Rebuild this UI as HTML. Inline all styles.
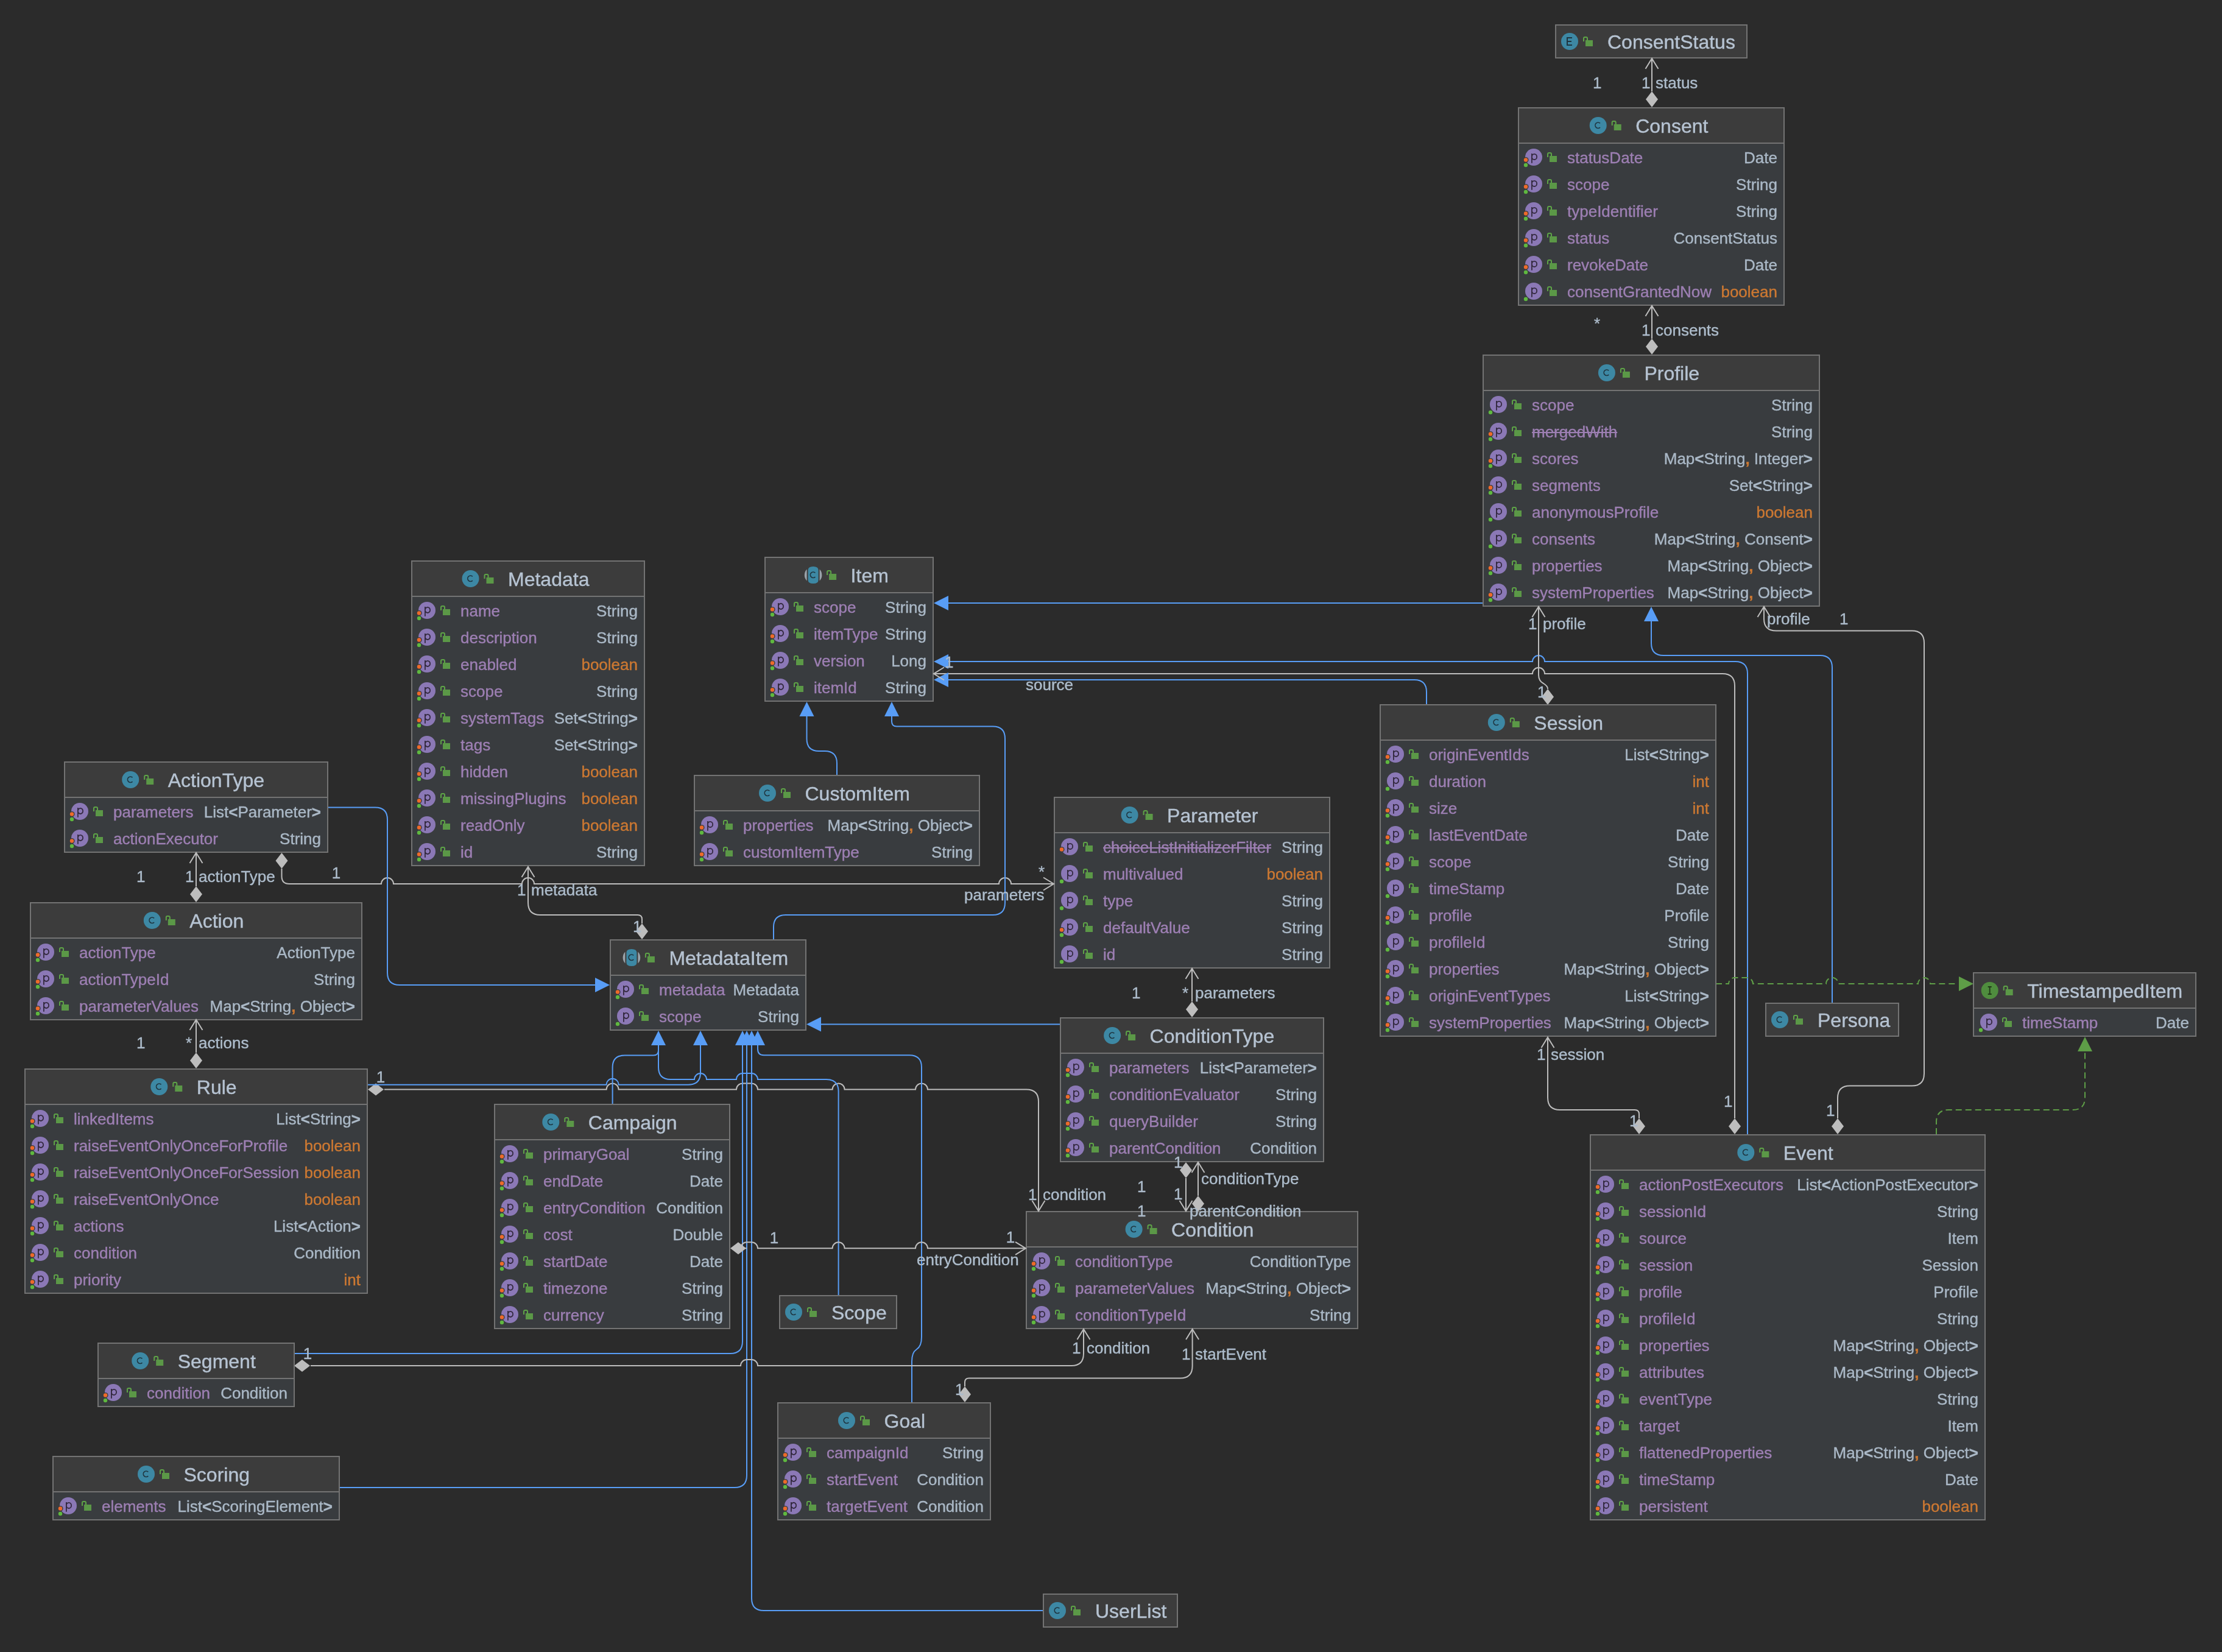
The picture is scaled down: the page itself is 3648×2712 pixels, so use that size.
<!DOCTYPE html>
<html><head><meta charset="utf-8"><style>
html,body{margin:0;padding:0;background:#2b2b2b;}
svg{display:block;font-family:"Liberation Sans", sans-serif;will-change:transform;}
</style></head><body>
<svg width="3648" height="2712" viewBox="0 0 3648 2712">
<rect width="3648" height="2712" fill="#2b2b2b"/>
<g><path d="M2712 96L2712 150" fill="none" stroke="#bdbdbd" stroke-width="2"/><path d="M2712 176L2702 163L2712 150L2722 163Z" fill="#bdbdbd"/><path d="M2712 502L2712 556" fill="none" stroke="#bdbdbd" stroke-width="2"/><path d="M2712 582L2702 569L2712 556L2722 569Z" fill="#bdbdbd"/><path d="M2435 990L1557 990" fill="none" stroke="#589df6" stroke-width="2"/><path d="M1533 990L1557 978L1557 1002Z" fill="#589df6"/><path d="M1557 1086L2516 1086A10 10 0 0 1 2526 1076A10 10 0 0 1 2536 1086L2849 1086Q2869 1086 2869 1106L2869 1862" fill="none" stroke="#589df6" stroke-width="2"/><path d="M1533 1086L1557 1074L1557 1098Z" fill="#589df6"/><path d="M1533 1106L2516 1106A10 10 0 0 1 2526 1096A10 10 0 0 1 2536 1106L2828 1106Q2848 1106 2848 1126L2848 1836" fill="none" stroke="#bdbdbd" stroke-width="2"/><path d="M2848 1862L2838 1849L2848 1836L2858 1849Z" fill="#bdbdbd"/><path d="M1557 1116L2322 1116Q2342 1116 2342 1136L2342 1157" fill="none" stroke="#589df6" stroke-width="2"/><path d="M1533 1116L1557 1104L1557 1128Z" fill="#589df6"/><path d="M2526 996V1108Q2526 1118 2534 1122Q2541 1126 2541 1131" fill="none" stroke="#bdbdbd" stroke-width="2"/><path d="M2541 1157L2531 1144L2541 1131L2551 1144Z" fill="#bdbdbd"/><path d="M2711 1020L2711 1056Q2711 1076 2731 1076L2988 1076Q3008 1076 3008 1096L3008 1646" fill="none" stroke="#589df6" stroke-width="2"/><path d="M2711 996L2699 1020L2723 1020Z" fill="#589df6"/><path d="M2896 996L2896 1015.8Q2896 1035.5 2915.8 1035.5L3139 1035.5Q3159 1035.5 3159 1055.5L3159 1762.5Q3159 1782.5 3139 1782.5L3037 1782.5Q3017 1782.5 3017 1802.5L3017 1836" fill="none" stroke="#bdbdbd" stroke-width="2"/><path d="M3017 1862L3007 1849L3017 1836L3027 1849Z" fill="#bdbdbd"/><path d="M2541 1703L2541 1802Q2541 1822 2561 1822L2684 1822Q2691 1822 2691 1829L2691 1836" fill="none" stroke="#bdbdbd" stroke-width="2"/><path d="M2691 1862L2681 1849L2691 1836L2701 1849Z" fill="#bdbdbd"/><path d="M2817 1615L2838 1615A10 10 0 0 1 2848 1605L2868 1605A10 10 0 0 1 2878 1615L2998 1615A10 10 0 0 1 3008 1605A10 10 0 0 1 3018 1615L3149 1615A10 10 0 0 1 3159 1605A10 10 0 0 1 3169 1615L3215 1615" fill="none" stroke="#5e9d47" stroke-width="2" stroke-dasharray="10 6"/><path d="M3240 1615L3216 1603L3216 1627Z" fill="#5e9d47"/><path d="M3179 1862L3179 1842Q3179 1822 3199 1822L3403 1822Q3423 1822 3423 1802L3423 1726" fill="none" stroke="#5e9d47" stroke-width="2" stroke-dasharray="10 6"/><path d="M3423 1702L3411 1726L3435 1726Z" fill="#5e9d47"/><path d="M322 1400L322 1455" fill="none" stroke="#bdbdbd" stroke-width="2"/><path d="M322 1481L312 1468L322 1455L332 1468Z" fill="#bdbdbd"/><path d="M322 1674L322 1728" fill="none" stroke="#bdbdbd" stroke-width="2"/><path d="M322 1754L312 1741L322 1728L332 1741Z" fill="#bdbdbd"/><path d="M462.5 1426L462.5 1438.5Q462.5 1451 475 1451L626 1451A10 10 0 0 1 636 1441A10 10 0 0 1 646 1451L857 1451A10 10 0 0 1 867 1441A10 10 0 0 1 877 1451L1640 1451A10 10 0 0 1 1650 1441A10 10 0 0 1 1660 1451L1730 1451" fill="none" stroke="#bdbdbd" stroke-width="2"/><path d="M462.5 1400L452.5 1413L462.5 1426L472.5 1413Z" fill="#bdbdbd"/><path d="M539 1325.5L616 1325.5Q636 1325.5 636 1345.5L636 1597Q636 1617 656 1617L977 1617" fill="none" stroke="#589df6" stroke-width="2"/><path d="M1001 1617L977 1605L977 1629Z" fill="#589df6"/><path d="M867 1423L867 1482Q867 1502 887 1502L1047 1502Q1054 1502 1054 1509L1054 1516" fill="none" stroke="#bdbdbd" stroke-width="2"/><path d="M1054 1542L1044 1529L1054 1516L1064 1529Z" fill="#bdbdbd"/><path d="M1324.5 1176L1324.5 1213Q1324.5 1233 1344.5 1233L1354 1233Q1374 1233 1374 1253L1374 1273" fill="none" stroke="#589df6" stroke-width="2"/><path d="M1324.5 1152L1312.5 1176L1336.5 1176Z" fill="#589df6"/><path d="M1270 1542L1270 1522Q1270 1502 1290 1502L1630 1502Q1650 1502 1650 1482L1650 1212.5Q1650 1192.5 1630 1192.5L1472.2 1192.5Q1464 1192.5 1464 1184.2L1464 1176" fill="none" stroke="#589df6" stroke-width="2"/><path d="M1464 1152L1452 1176L1476 1176Z" fill="#589df6"/><path d="M1740 1681.5L1348 1681.5" fill="none" stroke="#589df6" stroke-width="2"/><path d="M1324 1681.5L1348 1669.5L1348 1693.5Z" fill="#589df6"/><path d="M1957 1590L1957 1644" fill="none" stroke="#bdbdbd" stroke-width="2"/><path d="M1957 1670L1947 1657L1957 1644L1967 1657Z" fill="#bdbdbd"/><path d="M1947 1934L1947 1988" fill="none" stroke="#bdbdbd" stroke-width="2"/><path d="M1947 1908L1937 1921L1947 1934L1957 1921Z" fill="#bdbdbd"/><path d="M1967 1908L1967 1963" fill="none" stroke="#bdbdbd" stroke-width="2"/><path d="M1967 1989L1957 1976L1967 1963L1977 1976Z" fill="#bdbdbd"/><path d="M631 1788.5L995.6 1788.5A10 10 0 0 1 1005.6 1778.5A10 10 0 0 1 1015.6 1788.5L1209 1788.5A10 10 0 0 1 1219 1778.5L1234 1778.5A10 10 0 0 1 1244 1788.5L1366.6 1788.5A10 10 0 0 1 1376.6 1778.5A10 10 0 0 1 1386.6 1788.5L1503 1788.5A10 10 0 0 1 1513 1778.5A10 10 0 0 1 1523 1788.5L1685 1788.5Q1705 1788.5 1705 1808.5L1705 1988" fill="none" stroke="#bdbdbd" stroke-width="2"/><path d="M604 1788.5L617 1778.5L630 1788.5L617 1798.5Z" fill="#bdbdbd"/><path d="M604 1780.7L995.6 1780.7A10 10 0 0 1 1005.6 1770.7A10 10 0 0 1 1015.6 1780.7L1130 1780.7Q1150 1780.7 1150 1760.7L1150 1716" fill="none" stroke="#589df6" stroke-width="2"/><path d="M1150 1692L1138 1716L1162 1716Z" fill="#589df6"/><path d="M1005.6 1812L1005.6 1752.5Q1005.6 1732.5 1025.6 1732.5L1072.8 1732.5Q1081 1732.5 1081 1724.2L1081 1716" fill="none" stroke="#589df6" stroke-width="2"/><path d="M1081 1692L1069 1716L1093 1716Z" fill="#589df6"/><path d="M1081 1716L1081 1752Q1081 1772 1101 1772L1140 1772A10 10 0 0 1 1150 1762A10 10 0 0 1 1160 1772L1209 1772A10 10 0 0 1 1219 1762L1234 1762A10 10 0 0 1 1244 1772L1356.6 1772Q1376.6 1772 1376.6 1792L1376.6 2126" fill="none" stroke="#589df6" stroke-width="2"/><path d="M1244 1716V1722Q1244 1732.3 1254 1732.3H1493Q1513 1732.3 1513 1752V2195Q1513 2210 1505 2215Q1497 2220 1497 2235V2302" fill="none" stroke="#589df6" stroke-width="2"/><path d="M1244 1692L1232 1716L1256 1716Z" fill="#589df6"/><path d="M483 2222L1199 2222Q1219 2222 1219 2202L1219 1716" fill="none" stroke="#589df6" stroke-width="2"/><path d="M1219 1692L1207 1716L1231 1716Z" fill="#589df6"/><path d="M558 2442L1206 2442Q1226 2442 1226 2422L1226 1716" fill="none" stroke="#589df6" stroke-width="2"/><path d="M1226 1692L1214 1716L1238 1716Z" fill="#589df6"/><path d="M1712 2644L1254 2644Q1234 2644 1234 2624L1234 1716" fill="none" stroke="#589df6" stroke-width="2"/><path d="M1234 1692L1222 1716L1246 1716Z" fill="#589df6"/><path d="M1226 2049.3L1216 2049.3A10 10 0 0 1 1226 2039.3L1234 2039.3A10 10 0 0 1 1244 2049.3L1366.6 2049.3A10 10 0 0 1 1376.6 2039.3A10 10 0 0 1 1386.6 2049.3L1503 2049.3A10 10 0 0 1 1513 2039.3A10 10 0 0 1 1523 2049.3L1684 2049.3" fill="none" stroke="#bdbdbd" stroke-width="2"/><path d="M1199 2049.3L1212 2039.3L1225 2049.3L1212 2059.3Z" fill="#bdbdbd"/><path d="M510 2242L1216 2242A10 10 0 0 1 1226 2232L1234 2232A10 10 0 0 1 1244 2242L1759 2242Q1779 2242 1779 2222L1779 2182" fill="none" stroke="#bdbdbd" stroke-width="2"/><path d="M483 2242L496 2232L509 2242L496 2252Z" fill="#bdbdbd"/><path d="M1584 2276L1584 2269.2Q1584 2262.5 1590.8 2262.5L1937.6 2262.5Q1957.6 2262.5 1957.6 2242.5L1957.6 2182" fill="none" stroke="#bdbdbd" stroke-width="2"/><path d="M1584 2302L1574 2289L1584 2276L1594 2289Z" fill="#bdbdbd"/></g>
<g><rect x="2553" y="40" width="316" height="56" fill="#737373"/><rect x="2555" y="42" width="312" height="52" fill="#3c3c3c"/><circle cx="2577" cy="68" r="14" fill="#3d88a4"/><path d="M2581 62H2573V74H2581M2573 68H2580" fill="none" stroke="#1f3540" stroke-width="2"/><path d="M2600 68V63Q2600 61 2602 61H2604Q2606 61 2606 63V66" fill="none" stroke="#5ea447" stroke-width="2"/><rect x="2603" y="66" width="12" height="10" fill="#5b9847"/><text x="2639" y="80" font-size="32" fill="#b6c3d2" stroke="#b6c3d2" stroke-width="0.4">ConsentStatus</text><rect x="2492" y="176" width="438" height="326" fill="#737373"/><rect x="2494" y="178" width="434" height="56" fill="#3c3c3c"/><rect x="2494" y="236" width="434" height="264" fill="#393c3f"/><circle cx="2623.7" cy="206" r="14" fill="#3d88a4"/><path d="M2627.0 202.4A4.7 4.7 0 1 0 2627.0 209.1" fill="none" stroke="#1f3540" stroke-width="1.7"/><path d="M2646.7 206V201Q2646.7 199 2648.7 199H2650.7Q2652.7 199 2652.7 201V204" fill="none" stroke="#5ea447" stroke-width="2"/><rect x="2649.7" y="204" width="12" height="10" fill="#5b9847"/><text x="2685.2" y="218" font-size="32" fill="#b6c3d2" stroke="#b6c3d2" stroke-width="0.4">Consent</text><circle cx="2518" cy="258" r="14" fill="#8b78b6"/><path d="M2514.9 252V267.8M2514.9 257.4A4.1 4.6 0 1 1 2523.1 257.4A4.1 4.6 0 1 1 2514.9 257.4" fill="none" stroke="#33293f" stroke-width="1.8"/><circle cx="2505" cy="262.5" r="4.6" fill="#393c3f"/><circle cx="2505" cy="262.5" r="3.2" fill="#ee6a2a"/><circle cx="2505" cy="271" r="4.4" fill="#393c3f"/><circle cx="2505" cy="271" r="3.2" fill="#5fb83f"/><path d="M2541 258V253Q2541 251 2543 251H2545Q2547 251 2547 253V256" fill="none" stroke="#5ea447" stroke-width="2"/><rect x="2544" y="256" width="12" height="10" fill="#5b9847"/><text x="2573" y="268" font-size="26" fill="#9d7fb3" stroke="#9d7fb3" stroke-width="0.4">statusDate</text><text x="2918" y="268" font-size="26" fill="#aab8c6" stroke="#aab8c6" stroke-width="0.4" text-anchor="end">Date</text><circle cx="2518" cy="302" r="14" fill="#8b78b6"/><path d="M2514.9 296V311.8M2514.9 301.4A4.1 4.6 0 1 1 2523.1 301.4A4.1 4.6 0 1 1 2514.9 301.4" fill="none" stroke="#33293f" stroke-width="1.8"/><circle cx="2505" cy="306.5" r="4.6" fill="#393c3f"/><circle cx="2505" cy="306.5" r="3.2" fill="#ee6a2a"/><circle cx="2505" cy="315" r="4.4" fill="#393c3f"/><circle cx="2505" cy="315" r="3.2" fill="#5fb83f"/><path d="M2541 302V297Q2541 295 2543 295H2545Q2547 295 2547 297V300" fill="none" stroke="#5ea447" stroke-width="2"/><rect x="2544" y="300" width="12" height="10" fill="#5b9847"/><text x="2573" y="312" font-size="26" fill="#9d7fb3" stroke="#9d7fb3" stroke-width="0.4">scope</text><text x="2918" y="312" font-size="26" fill="#aab8c6" stroke="#aab8c6" stroke-width="0.4" text-anchor="end">String</text><circle cx="2518" cy="346" r="14" fill="#8b78b6"/><path d="M2514.9 340V355.8M2514.9 345.4A4.1 4.6 0 1 1 2523.1 345.4A4.1 4.6 0 1 1 2514.9 345.4" fill="none" stroke="#33293f" stroke-width="1.8"/><circle cx="2505" cy="350.5" r="4.6" fill="#393c3f"/><circle cx="2505" cy="350.5" r="3.2" fill="#ee6a2a"/><circle cx="2505" cy="359" r="4.4" fill="#393c3f"/><circle cx="2505" cy="359" r="3.2" fill="#5fb83f"/><path d="M2541 346V341Q2541 339 2543 339H2545Q2547 339 2547 341V344" fill="none" stroke="#5ea447" stroke-width="2"/><rect x="2544" y="344" width="12" height="10" fill="#5b9847"/><text x="2573" y="356" font-size="26" fill="#9d7fb3" stroke="#9d7fb3" stroke-width="0.4">typeIdentifier</text><text x="2918" y="356" font-size="26" fill="#aab8c6" stroke="#aab8c6" stroke-width="0.4" text-anchor="end">String</text><circle cx="2518" cy="390" r="14" fill="#8b78b6"/><path d="M2514.9 384V399.8M2514.9 389.4A4.1 4.6 0 1 1 2523.1 389.4A4.1 4.6 0 1 1 2514.9 389.4" fill="none" stroke="#33293f" stroke-width="1.8"/><circle cx="2505" cy="394.5" r="4.6" fill="#393c3f"/><circle cx="2505" cy="394.5" r="3.2" fill="#ee6a2a"/><circle cx="2505" cy="403" r="4.4" fill="#393c3f"/><circle cx="2505" cy="403" r="3.2" fill="#5fb83f"/><path d="M2541 390V385Q2541 383 2543 383H2545Q2547 383 2547 385V388" fill="none" stroke="#5ea447" stroke-width="2"/><rect x="2544" y="388" width="12" height="10" fill="#5b9847"/><text x="2573" y="400" font-size="26" fill="#9d7fb3" stroke="#9d7fb3" stroke-width="0.4">status</text><text x="2918" y="400" font-size="26" fill="#aab8c6" stroke="#aab8c6" stroke-width="0.4" text-anchor="end">ConsentStatus</text><circle cx="2518" cy="434" r="14" fill="#8b78b6"/><path d="M2514.9 428V443.8M2514.9 433.4A4.1 4.6 0 1 1 2523.1 433.4A4.1 4.6 0 1 1 2514.9 433.4" fill="none" stroke="#33293f" stroke-width="1.8"/><circle cx="2505" cy="438.5" r="4.6" fill="#393c3f"/><circle cx="2505" cy="438.5" r="3.2" fill="#ee6a2a"/><circle cx="2505" cy="447" r="4.4" fill="#393c3f"/><circle cx="2505" cy="447" r="3.2" fill="#5fb83f"/><path d="M2541 434V429Q2541 427 2543 427H2545Q2547 427 2547 429V432" fill="none" stroke="#5ea447" stroke-width="2"/><rect x="2544" y="432" width="12" height="10" fill="#5b9847"/><text x="2573" y="444" font-size="26" fill="#9d7fb3" stroke="#9d7fb3" stroke-width="0.4">revokeDate</text><text x="2918" y="444" font-size="26" fill="#aab8c6" stroke="#aab8c6" stroke-width="0.4" text-anchor="end">Date</text><circle cx="2518" cy="478" r="14" fill="#8b78b6"/><path d="M2514.9 472V487.8M2514.9 477.4A4.1 4.6 0 1 1 2523.1 477.4A4.1 4.6 0 1 1 2514.9 477.4" fill="none" stroke="#33293f" stroke-width="1.8"/><circle cx="2505" cy="491" r="4.4" fill="#393c3f"/><circle cx="2505" cy="491" r="3.2" fill="#5fb83f"/><path d="M2541 478V473Q2541 471 2543 471H2545Q2547 471 2547 473V476" fill="none" stroke="#5ea447" stroke-width="2"/><rect x="2544" y="476" width="12" height="10" fill="#5b9847"/><text x="2573" y="488" font-size="26" fill="#9d7fb3" stroke="#9d7fb3" stroke-width="0.4">consentGrantedNow</text><text x="2918" y="488" font-size="26" fill="#aab8c6" stroke="#aab8c6" stroke-width="0.4" text-anchor="end"><tspan fill="#cc7832" stroke="#cc7832">boolean</tspan></text><rect x="2434" y="582" width="554" height="414" fill="#737373"/><rect x="2436" y="584" width="550" height="56" fill="#3c3c3c"/><rect x="2436" y="642" width="550" height="352" fill="#393c3f"/><circle cx="2637.9" cy="612" r="14" fill="#3d88a4"/><path d="M2641.2000000000003 608.4A4.7 4.7 0 1 0 2641.2000000000003 615.1" fill="none" stroke="#1f3540" stroke-width="1.7"/><path d="M2660.9 612V607Q2660.9 605 2662.9 605H2664.9Q2666.9 605 2666.9 607V610" fill="none" stroke="#5ea447" stroke-width="2"/><rect x="2663.9" y="610" width="12" height="10" fill="#5b9847"/><text x="2699.4" y="624" font-size="32" fill="#b6c3d2" stroke="#b6c3d2" stroke-width="0.4">Profile</text><circle cx="2460" cy="664" r="14" fill="#8b78b6"/><path d="M2456.9 658V673.8M2456.9 663.4A4.1 4.6 0 1 1 2465.1 663.4A4.1 4.6 0 1 1 2456.9 663.4" fill="none" stroke="#33293f" stroke-width="1.8"/><circle cx="2447" cy="677" r="4.4" fill="#393c3f"/><circle cx="2447" cy="677" r="3.2" fill="#5fb83f"/><path d="M2483 664V659Q2483 657 2485 657H2487Q2489 657 2489 659V662" fill="none" stroke="#5ea447" stroke-width="2"/><rect x="2486" y="662" width="12" height="10" fill="#5b9847"/><text x="2515" y="674" font-size="26" fill="#9d7fb3" stroke="#9d7fb3" stroke-width="0.4">scope</text><text x="2976" y="674" font-size="26" fill="#aab8c6" stroke="#aab8c6" stroke-width="0.4" text-anchor="end">String</text><circle cx="2460" cy="708" r="14" fill="#8b78b6"/><path d="M2456.9 702V717.8M2456.9 707.4A4.1 4.6 0 1 1 2465.1 707.4A4.1 4.6 0 1 1 2456.9 707.4" fill="none" stroke="#33293f" stroke-width="1.8"/><circle cx="2447" cy="712.5" r="4.6" fill="#393c3f"/><circle cx="2447" cy="712.5" r="3.2" fill="#ee6a2a"/><circle cx="2447" cy="721" r="4.4" fill="#393c3f"/><circle cx="2447" cy="721" r="3.2" fill="#5fb83f"/><path d="M2483 708V703Q2483 701 2485 701H2487Q2489 701 2489 703V706" fill="none" stroke="#5ea447" stroke-width="2"/><rect x="2486" y="706" width="12" height="10" fill="#5b9847"/><text x="2515" y="718" font-size="26" fill="#9d7fb3" stroke="#9d7fb3" stroke-width="0.4">mergedWith</text><rect x="2515" y="709" width="140.2" height="2" fill="#9d7fb3"/><text x="2976" y="718" font-size="26" fill="#aab8c6" stroke="#aab8c6" stroke-width="0.4" text-anchor="end">String</text><circle cx="2460" cy="752" r="14" fill="#8b78b6"/><path d="M2456.9 746V761.8M2456.9 751.4A4.1 4.6 0 1 1 2465.1 751.4A4.1 4.6 0 1 1 2456.9 751.4" fill="none" stroke="#33293f" stroke-width="1.8"/><circle cx="2447" cy="756.5" r="4.6" fill="#393c3f"/><circle cx="2447" cy="756.5" r="3.2" fill="#ee6a2a"/><circle cx="2447" cy="765" r="4.4" fill="#393c3f"/><circle cx="2447" cy="765" r="3.2" fill="#5fb83f"/><path d="M2483 752V747Q2483 745 2485 745H2487Q2489 745 2489 747V750" fill="none" stroke="#5ea447" stroke-width="2"/><rect x="2486" y="750" width="12" height="10" fill="#5b9847"/><text x="2515" y="762" font-size="26" fill="#9d7fb3" stroke="#9d7fb3" stroke-width="0.4">scores</text><text x="2976" y="762" font-size="26" fill="#aab8c6" stroke="#aab8c6" stroke-width="0.4" text-anchor="end">Map<tspan font-weight="bold">&lt;</tspan>String<tspan fill="#cc7832" stroke="#cc7832" font-weight="bold">,</tspan> Integer<tspan font-weight="bold">&gt;</tspan></text><circle cx="2460" cy="796" r="14" fill="#8b78b6"/><path d="M2456.9 790V805.8M2456.9 795.4A4.1 4.6 0 1 1 2465.1 795.4A4.1 4.6 0 1 1 2456.9 795.4" fill="none" stroke="#33293f" stroke-width="1.8"/><circle cx="2447" cy="800.5" r="4.6" fill="#393c3f"/><circle cx="2447" cy="800.5" r="3.2" fill="#ee6a2a"/><circle cx="2447" cy="809" r="4.4" fill="#393c3f"/><circle cx="2447" cy="809" r="3.2" fill="#5fb83f"/><path d="M2483 796V791Q2483 789 2485 789H2487Q2489 789 2489 791V794" fill="none" stroke="#5ea447" stroke-width="2"/><rect x="2486" y="794" width="12" height="10" fill="#5b9847"/><text x="2515" y="806" font-size="26" fill="#9d7fb3" stroke="#9d7fb3" stroke-width="0.4">segments</text><text x="2976" y="806" font-size="26" fill="#aab8c6" stroke="#aab8c6" stroke-width="0.4" text-anchor="end">Set<tspan font-weight="bold">&lt;</tspan>String<tspan font-weight="bold">&gt;</tspan></text><circle cx="2460" cy="840" r="14" fill="#8b78b6"/><path d="M2456.9 834V849.8M2456.9 839.4A4.1 4.6 0 1 1 2465.1 839.4A4.1 4.6 0 1 1 2456.9 839.4" fill="none" stroke="#33293f" stroke-width="1.8"/><circle cx="2447" cy="853" r="4.4" fill="#393c3f"/><circle cx="2447" cy="853" r="3.2" fill="#5fb83f"/><path d="M2483 840V835Q2483 833 2485 833H2487Q2489 833 2489 835V838" fill="none" stroke="#5ea447" stroke-width="2"/><rect x="2486" y="838" width="12" height="10" fill="#5b9847"/><text x="2515" y="850" font-size="26" fill="#9d7fb3" stroke="#9d7fb3" stroke-width="0.4">anonymousProfile</text><text x="2976" y="850" font-size="26" fill="#aab8c6" stroke="#aab8c6" stroke-width="0.4" text-anchor="end"><tspan fill="#cc7832" stroke="#cc7832">boolean</tspan></text><circle cx="2460" cy="884" r="14" fill="#8b78b6"/><path d="M2456.9 878V893.8M2456.9 883.4A4.1 4.6 0 1 1 2465.1 883.4A4.1 4.6 0 1 1 2456.9 883.4" fill="none" stroke="#33293f" stroke-width="1.8"/><circle cx="2447" cy="897" r="4.4" fill="#393c3f"/><circle cx="2447" cy="897" r="3.2" fill="#5fb83f"/><path d="M2483 884V879Q2483 877 2485 877H2487Q2489 877 2489 879V882" fill="none" stroke="#5ea447" stroke-width="2"/><rect x="2486" y="882" width="12" height="10" fill="#5b9847"/><text x="2515" y="894" font-size="26" fill="#9d7fb3" stroke="#9d7fb3" stroke-width="0.4">consents</text><text x="2976" y="894" font-size="26" fill="#aab8c6" stroke="#aab8c6" stroke-width="0.4" text-anchor="end">Map<tspan font-weight="bold">&lt;</tspan>String<tspan fill="#cc7832" stroke="#cc7832" font-weight="bold">,</tspan> Consent<tspan font-weight="bold">&gt;</tspan></text><circle cx="2460" cy="928" r="14" fill="#8b78b6"/><path d="M2456.9 922V937.8M2456.9 927.4A4.1 4.6 0 1 1 2465.1 927.4A4.1 4.6 0 1 1 2456.9 927.4" fill="none" stroke="#33293f" stroke-width="1.8"/><circle cx="2447" cy="932.5" r="4.6" fill="#393c3f"/><circle cx="2447" cy="932.5" r="3.2" fill="#ee6a2a"/><circle cx="2447" cy="941" r="4.4" fill="#393c3f"/><circle cx="2447" cy="941" r="3.2" fill="#5fb83f"/><path d="M2483 928V923Q2483 921 2485 921H2487Q2489 921 2489 923V926" fill="none" stroke="#5ea447" stroke-width="2"/><rect x="2486" y="926" width="12" height="10" fill="#5b9847"/><text x="2515" y="938" font-size="26" fill="#9d7fb3" stroke="#9d7fb3" stroke-width="0.4">properties</text><text x="2976" y="938" font-size="26" fill="#aab8c6" stroke="#aab8c6" stroke-width="0.4" text-anchor="end">Map<tspan font-weight="bold">&lt;</tspan>String<tspan fill="#cc7832" stroke="#cc7832" font-weight="bold">,</tspan> Object<tspan font-weight="bold">&gt;</tspan></text><circle cx="2460" cy="972" r="14" fill="#8b78b6"/><path d="M2456.9 966V981.8M2456.9 971.4A4.1 4.6 0 1 1 2465.1 971.4A4.1 4.6 0 1 1 2456.9 971.4" fill="none" stroke="#33293f" stroke-width="1.8"/><circle cx="2447" cy="976.5" r="4.6" fill="#393c3f"/><circle cx="2447" cy="976.5" r="3.2" fill="#ee6a2a"/><circle cx="2447" cy="985" r="4.4" fill="#393c3f"/><circle cx="2447" cy="985" r="3.2" fill="#5fb83f"/><path d="M2483 972V967Q2483 965 2485 965H2487Q2489 965 2489 967V970" fill="none" stroke="#5ea447" stroke-width="2"/><rect x="2486" y="970" width="12" height="10" fill="#5b9847"/><text x="2515" y="982" font-size="26" fill="#9d7fb3" stroke="#9d7fb3" stroke-width="0.4">systemProperties</text><text x="2976" y="982" font-size="26" fill="#aab8c6" stroke="#aab8c6" stroke-width="0.4" text-anchor="end">Map<tspan font-weight="bold">&lt;</tspan>String<tspan fill="#cc7832" stroke="#cc7832" font-weight="bold">,</tspan> Object<tspan font-weight="bold">&gt;</tspan></text><rect x="675" y="920" width="384" height="502" fill="#737373"/><rect x="677" y="922" width="380" height="56" fill="#3c3c3c"/><rect x="677" y="980" width="380" height="440" fill="#393c3f"/><circle cx="772.5" cy="950" r="14" fill="#3d88a4"/><path d="M775.8 946.4A4.7 4.7 0 1 0 775.8 953.1" fill="none" stroke="#1f3540" stroke-width="1.7"/><path d="M795.5 950V945Q795.5 943 797.5 943H799.5Q801.5 943 801.5 945V948" fill="none" stroke="#5ea447" stroke-width="2"/><rect x="798.5" y="948" width="12" height="10" fill="#5b9847"/><text x="834.0" y="962" font-size="32" fill="#b6c3d2" stroke="#b6c3d2" stroke-width="0.4">Metadata</text><circle cx="701" cy="1002" r="14" fill="#8b78b6"/><path d="M697.9 996V1011.8M697.9 1001.4A4.1 4.6 0 1 1 706.1 1001.4A4.1 4.6 0 1 1 697.9 1001.4" fill="none" stroke="#33293f" stroke-width="1.8"/><circle cx="688" cy="1006.5" r="4.6" fill="#393c3f"/><circle cx="688" cy="1006.5" r="3.2" fill="#ee6a2a"/><circle cx="688" cy="1015" r="4.4" fill="#393c3f"/><circle cx="688" cy="1015" r="3.2" fill="#5fb83f"/><path d="M724 1002V997Q724 995 726 995H728Q730 995 730 997V1000" fill="none" stroke="#5ea447" stroke-width="2"/><rect x="727" y="1000" width="12" height="10" fill="#5b9847"/><text x="756" y="1012" font-size="26" fill="#9d7fb3" stroke="#9d7fb3" stroke-width="0.4">name</text><text x="1047" y="1012" font-size="26" fill="#aab8c6" stroke="#aab8c6" stroke-width="0.4" text-anchor="end">String</text><circle cx="701" cy="1046" r="14" fill="#8b78b6"/><path d="M697.9 1040V1055.8M697.9 1045.4A4.1 4.6 0 1 1 706.1 1045.4A4.1 4.6 0 1 1 697.9 1045.4" fill="none" stroke="#33293f" stroke-width="1.8"/><circle cx="688" cy="1050.5" r="4.6" fill="#393c3f"/><circle cx="688" cy="1050.5" r="3.2" fill="#ee6a2a"/><circle cx="688" cy="1059" r="4.4" fill="#393c3f"/><circle cx="688" cy="1059" r="3.2" fill="#5fb83f"/><path d="M724 1046V1041Q724 1039 726 1039H728Q730 1039 730 1041V1044" fill="none" stroke="#5ea447" stroke-width="2"/><rect x="727" y="1044" width="12" height="10" fill="#5b9847"/><text x="756" y="1056" font-size="26" fill="#9d7fb3" stroke="#9d7fb3" stroke-width="0.4">description</text><text x="1047" y="1056" font-size="26" fill="#aab8c6" stroke="#aab8c6" stroke-width="0.4" text-anchor="end">String</text><circle cx="701" cy="1090" r="14" fill="#8b78b6"/><path d="M697.9 1084V1099.8M697.9 1089.4A4.1 4.6 0 1 1 706.1 1089.4A4.1 4.6 0 1 1 697.9 1089.4" fill="none" stroke="#33293f" stroke-width="1.8"/><circle cx="688" cy="1094.5" r="4.6" fill="#393c3f"/><circle cx="688" cy="1094.5" r="3.2" fill="#ee6a2a"/><circle cx="688" cy="1103" r="4.4" fill="#393c3f"/><circle cx="688" cy="1103" r="3.2" fill="#5fb83f"/><path d="M724 1090V1085Q724 1083 726 1083H728Q730 1083 730 1085V1088" fill="none" stroke="#5ea447" stroke-width="2"/><rect x="727" y="1088" width="12" height="10" fill="#5b9847"/><text x="756" y="1100" font-size="26" fill="#9d7fb3" stroke="#9d7fb3" stroke-width="0.4">enabled</text><text x="1047" y="1100" font-size="26" fill="#aab8c6" stroke="#aab8c6" stroke-width="0.4" text-anchor="end"><tspan fill="#cc7832" stroke="#cc7832">boolean</tspan></text><circle cx="701" cy="1134" r="14" fill="#8b78b6"/><path d="M697.9 1128V1143.8M697.9 1133.4A4.1 4.6 0 1 1 706.1 1133.4A4.1 4.6 0 1 1 697.9 1133.4" fill="none" stroke="#33293f" stroke-width="1.8"/><circle cx="688" cy="1138.5" r="4.6" fill="#393c3f"/><circle cx="688" cy="1138.5" r="3.2" fill="#ee6a2a"/><circle cx="688" cy="1147" r="4.4" fill="#393c3f"/><circle cx="688" cy="1147" r="3.2" fill="#5fb83f"/><path d="M724 1134V1129Q724 1127 726 1127H728Q730 1127 730 1129V1132" fill="none" stroke="#5ea447" stroke-width="2"/><rect x="727" y="1132" width="12" height="10" fill="#5b9847"/><text x="756" y="1144" font-size="26" fill="#9d7fb3" stroke="#9d7fb3" stroke-width="0.4">scope</text><text x="1047" y="1144" font-size="26" fill="#aab8c6" stroke="#aab8c6" stroke-width="0.4" text-anchor="end">String</text><circle cx="701" cy="1178" r="14" fill="#8b78b6"/><path d="M697.9 1172V1187.8M697.9 1177.4A4.1 4.6 0 1 1 706.1 1177.4A4.1 4.6 0 1 1 697.9 1177.4" fill="none" stroke="#33293f" stroke-width="1.8"/><circle cx="688" cy="1182.5" r="4.6" fill="#393c3f"/><circle cx="688" cy="1182.5" r="3.2" fill="#ee6a2a"/><circle cx="688" cy="1191" r="4.4" fill="#393c3f"/><circle cx="688" cy="1191" r="3.2" fill="#5fb83f"/><path d="M724 1178V1173Q724 1171 726 1171H728Q730 1171 730 1173V1176" fill="none" stroke="#5ea447" stroke-width="2"/><rect x="727" y="1176" width="12" height="10" fill="#5b9847"/><text x="756" y="1188" font-size="26" fill="#9d7fb3" stroke="#9d7fb3" stroke-width="0.4">systemTags</text><text x="1047" y="1188" font-size="26" fill="#aab8c6" stroke="#aab8c6" stroke-width="0.4" text-anchor="end">Set<tspan font-weight="bold">&lt;</tspan>String<tspan font-weight="bold">&gt;</tspan></text><circle cx="701" cy="1222" r="14" fill="#8b78b6"/><path d="M697.9 1216V1231.8M697.9 1221.4A4.1 4.6 0 1 1 706.1 1221.4A4.1 4.6 0 1 1 697.9 1221.4" fill="none" stroke="#33293f" stroke-width="1.8"/><circle cx="688" cy="1226.5" r="4.6" fill="#393c3f"/><circle cx="688" cy="1226.5" r="3.2" fill="#ee6a2a"/><circle cx="688" cy="1235" r="4.4" fill="#393c3f"/><circle cx="688" cy="1235" r="3.2" fill="#5fb83f"/><path d="M724 1222V1217Q724 1215 726 1215H728Q730 1215 730 1217V1220" fill="none" stroke="#5ea447" stroke-width="2"/><rect x="727" y="1220" width="12" height="10" fill="#5b9847"/><text x="756" y="1232" font-size="26" fill="#9d7fb3" stroke="#9d7fb3" stroke-width="0.4">tags</text><text x="1047" y="1232" font-size="26" fill="#aab8c6" stroke="#aab8c6" stroke-width="0.4" text-anchor="end">Set<tspan font-weight="bold">&lt;</tspan>String<tspan font-weight="bold">&gt;</tspan></text><circle cx="701" cy="1266" r="14" fill="#8b78b6"/><path d="M697.9 1260V1275.8M697.9 1265.4A4.1 4.6 0 1 1 706.1 1265.4A4.1 4.6 0 1 1 697.9 1265.4" fill="none" stroke="#33293f" stroke-width="1.8"/><circle cx="688" cy="1270.5" r="4.6" fill="#393c3f"/><circle cx="688" cy="1270.5" r="3.2" fill="#ee6a2a"/><circle cx="688" cy="1279" r="4.4" fill="#393c3f"/><circle cx="688" cy="1279" r="3.2" fill="#5fb83f"/><path d="M724 1266V1261Q724 1259 726 1259H728Q730 1259 730 1261V1264" fill="none" stroke="#5ea447" stroke-width="2"/><rect x="727" y="1264" width="12" height="10" fill="#5b9847"/><text x="756" y="1276" font-size="26" fill="#9d7fb3" stroke="#9d7fb3" stroke-width="0.4">hidden</text><text x="1047" y="1276" font-size="26" fill="#aab8c6" stroke="#aab8c6" stroke-width="0.4" text-anchor="end"><tspan fill="#cc7832" stroke="#cc7832">boolean</tspan></text><circle cx="701" cy="1310" r="14" fill="#8b78b6"/><path d="M697.9 1304V1319.8M697.9 1309.4A4.1 4.6 0 1 1 706.1 1309.4A4.1 4.6 0 1 1 697.9 1309.4" fill="none" stroke="#33293f" stroke-width="1.8"/><circle cx="688" cy="1314.5" r="4.6" fill="#393c3f"/><circle cx="688" cy="1314.5" r="3.2" fill="#ee6a2a"/><circle cx="688" cy="1323" r="4.4" fill="#393c3f"/><circle cx="688" cy="1323" r="3.2" fill="#5fb83f"/><path d="M724 1310V1305Q724 1303 726 1303H728Q730 1303 730 1305V1308" fill="none" stroke="#5ea447" stroke-width="2"/><rect x="727" y="1308" width="12" height="10" fill="#5b9847"/><text x="756" y="1320" font-size="26" fill="#9d7fb3" stroke="#9d7fb3" stroke-width="0.4">missingPlugins</text><text x="1047" y="1320" font-size="26" fill="#aab8c6" stroke="#aab8c6" stroke-width="0.4" text-anchor="end"><tspan fill="#cc7832" stroke="#cc7832">boolean</tspan></text><circle cx="701" cy="1354" r="14" fill="#8b78b6"/><path d="M697.9 1348V1363.8M697.9 1353.4A4.1 4.6 0 1 1 706.1 1353.4A4.1 4.6 0 1 1 697.9 1353.4" fill="none" stroke="#33293f" stroke-width="1.8"/><circle cx="688" cy="1358.5" r="4.6" fill="#393c3f"/><circle cx="688" cy="1358.5" r="3.2" fill="#ee6a2a"/><circle cx="688" cy="1367" r="4.4" fill="#393c3f"/><circle cx="688" cy="1367" r="3.2" fill="#5fb83f"/><path d="M724 1354V1349Q724 1347 726 1347H728Q730 1347 730 1349V1352" fill="none" stroke="#5ea447" stroke-width="2"/><rect x="727" y="1352" width="12" height="10" fill="#5b9847"/><text x="756" y="1364" font-size="26" fill="#9d7fb3" stroke="#9d7fb3" stroke-width="0.4">readOnly</text><text x="1047" y="1364" font-size="26" fill="#aab8c6" stroke="#aab8c6" stroke-width="0.4" text-anchor="end"><tspan fill="#cc7832" stroke="#cc7832">boolean</tspan></text><circle cx="701" cy="1398" r="14" fill="#8b78b6"/><path d="M697.9 1392V1407.8M697.9 1397.4A4.1 4.6 0 1 1 706.1 1397.4A4.1 4.6 0 1 1 697.9 1397.4" fill="none" stroke="#33293f" stroke-width="1.8"/><circle cx="688" cy="1402.5" r="4.6" fill="#393c3f"/><circle cx="688" cy="1402.5" r="3.2" fill="#ee6a2a"/><circle cx="688" cy="1411" r="4.4" fill="#393c3f"/><circle cx="688" cy="1411" r="3.2" fill="#5fb83f"/><path d="M724 1398V1393Q724 1391 726 1391H728Q730 1391 730 1393V1396" fill="none" stroke="#5ea447" stroke-width="2"/><rect x="727" y="1396" width="12" height="10" fill="#5b9847"/><text x="756" y="1408" font-size="26" fill="#9d7fb3" stroke="#9d7fb3" stroke-width="0.4">id</text><text x="1047" y="1408" font-size="26" fill="#aab8c6" stroke="#aab8c6" stroke-width="0.4" text-anchor="end">String</text><rect x="1255" y="914" width="278" height="238" fill="#737373"/><rect x="1257" y="916" width="274" height="56" fill="#3c3c3c"/><rect x="1257" y="974" width="274" height="176" fill="#393c3f"/><path d="M1324.6 934.4A14 14 0 0 0 1324.6 953.6Z" fill="#9aa3aa"/><path d="M1345.6 934.4A14 14 0 0 1 1345.6 953.6Z" fill="#9aa3aa"/><path d="M1326.6 936Q1326.6 930 1335.1 930Q1343.6 930 1343.6 936V952Q1343.6 958 1335.1 958Q1326.6 958 1326.6 952Z" fill="#3d88a4"/><path d="M1338.3999999999999 940.4A4.7 4.7 0 1 0 1338.3999999999999 947.1" fill="none" stroke="#1f3540" stroke-width="1.7"/><path d="M1358.1 944V939Q1358.1 937 1360.1 937H1362.1Q1364.1 937 1364.1 939V942" fill="none" stroke="#5ea447" stroke-width="2"/><rect x="1361.1" y="942" width="12" height="10" fill="#5b9847"/><text x="1396.6" y="956" font-size="32" fill="#b6c3d2" stroke="#b6c3d2" stroke-width="0.4">Item</text><circle cx="1281" cy="996" r="14" fill="#8b78b6"/><path d="M1277.9 990V1005.8M1277.9 995.4A4.1 4.6 0 1 1 1286.1 995.4A4.1 4.6 0 1 1 1277.9 995.4" fill="none" stroke="#33293f" stroke-width="1.8"/><circle cx="1268" cy="1000.5" r="4.6" fill="#393c3f"/><circle cx="1268" cy="1000.5" r="3.2" fill="#ee6a2a"/><circle cx="1268" cy="1009" r="4.4" fill="#393c3f"/><circle cx="1268" cy="1009" r="3.2" fill="#5fb83f"/><path d="M1304 996V991Q1304 989 1306 989H1308Q1310 989 1310 991V994" fill="none" stroke="#5ea447" stroke-width="2"/><rect x="1307" y="994" width="12" height="10" fill="#5b9847"/><text x="1336" y="1006" font-size="26" fill="#9d7fb3" stroke="#9d7fb3" stroke-width="0.4">scope</text><text x="1521" y="1006" font-size="26" fill="#aab8c6" stroke="#aab8c6" stroke-width="0.4" text-anchor="end">String</text><circle cx="1281" cy="1040" r="14" fill="#8b78b6"/><path d="M1277.9 1034V1049.8M1277.9 1039.4A4.1 4.6 0 1 1 1286.1 1039.4A4.1 4.6 0 1 1 1277.9 1039.4" fill="none" stroke="#33293f" stroke-width="1.8"/><circle cx="1268" cy="1044.5" r="4.6" fill="#393c3f"/><circle cx="1268" cy="1044.5" r="3.2" fill="#ee6a2a"/><circle cx="1268" cy="1053" r="4.4" fill="#393c3f"/><circle cx="1268" cy="1053" r="3.2" fill="#5fb83f"/><path d="M1304 1040V1035Q1304 1033 1306 1033H1308Q1310 1033 1310 1035V1038" fill="none" stroke="#5ea447" stroke-width="2"/><rect x="1307" y="1038" width="12" height="10" fill="#5b9847"/><text x="1336" y="1050" font-size="26" fill="#9d7fb3" stroke="#9d7fb3" stroke-width="0.4">itemType</text><text x="1521" y="1050" font-size="26" fill="#aab8c6" stroke="#aab8c6" stroke-width="0.4" text-anchor="end">String</text><circle cx="1281" cy="1084" r="14" fill="#8b78b6"/><path d="M1277.9 1078V1093.8M1277.9 1083.4A4.1 4.6 0 1 1 1286.1 1083.4A4.1 4.6 0 1 1 1277.9 1083.4" fill="none" stroke="#33293f" stroke-width="1.8"/><circle cx="1268" cy="1088.5" r="4.6" fill="#393c3f"/><circle cx="1268" cy="1088.5" r="3.2" fill="#ee6a2a"/><circle cx="1268" cy="1097" r="4.4" fill="#393c3f"/><circle cx="1268" cy="1097" r="3.2" fill="#5fb83f"/><path d="M1304 1084V1079Q1304 1077 1306 1077H1308Q1310 1077 1310 1079V1082" fill="none" stroke="#5ea447" stroke-width="2"/><rect x="1307" y="1082" width="12" height="10" fill="#5b9847"/><text x="1336" y="1094" font-size="26" fill="#9d7fb3" stroke="#9d7fb3" stroke-width="0.4">version</text><text x="1521" y="1094" font-size="26" fill="#aab8c6" stroke="#aab8c6" stroke-width="0.4" text-anchor="end">Long</text><circle cx="1281" cy="1128" r="14" fill="#8b78b6"/><path d="M1277.9 1122V1137.8M1277.9 1127.4A4.1 4.6 0 1 1 1286.1 1127.4A4.1 4.6 0 1 1 1277.9 1127.4" fill="none" stroke="#33293f" stroke-width="1.8"/><circle cx="1268" cy="1132.5" r="4.6" fill="#393c3f"/><circle cx="1268" cy="1132.5" r="3.2" fill="#ee6a2a"/><circle cx="1268" cy="1141" r="4.4" fill="#393c3f"/><circle cx="1268" cy="1141" r="3.2" fill="#5fb83f"/><path d="M1304 1128V1123Q1304 1121 1306 1121H1308Q1310 1121 1310 1123V1126" fill="none" stroke="#5ea447" stroke-width="2"/><rect x="1307" y="1126" width="12" height="10" fill="#5b9847"/><text x="1336" y="1138" font-size="26" fill="#9d7fb3" stroke="#9d7fb3" stroke-width="0.4">itemId</text><text x="1521" y="1138" font-size="26" fill="#aab8c6" stroke="#aab8c6" stroke-width="0.4" text-anchor="end">String</text><rect x="105" y="1250" width="434" height="150" fill="#737373"/><rect x="107" y="1252" width="430" height="56" fill="#3c3c3c"/><rect x="107" y="1310" width="430" height="88" fill="#393c3f"/><circle cx="214.2" cy="1280" r="14" fill="#3d88a4"/><path d="M217.5 1276.4A4.7 4.7 0 1 0 217.5 1283.1" fill="none" stroke="#1f3540" stroke-width="1.7"/><path d="M237.2 1280V1275Q237.2 1273 239.2 1273H241.2Q243.2 1273 243.2 1275V1278" fill="none" stroke="#5ea447" stroke-width="2"/><rect x="240.2" y="1278" width="12" height="10" fill="#5b9847"/><text x="275.7" y="1292" font-size="32" fill="#b6c3d2" stroke="#b6c3d2" stroke-width="0.4">ActionType</text><circle cx="131" cy="1332" r="14" fill="#8b78b6"/><path d="M127.9 1326V1341.8M127.9 1331.4A4.1 4.6 0 1 1 136.1 1331.4A4.1 4.6 0 1 1 127.9 1331.4" fill="none" stroke="#33293f" stroke-width="1.8"/><circle cx="118" cy="1336.5" r="4.6" fill="#393c3f"/><circle cx="118" cy="1336.5" r="3.2" fill="#ee6a2a"/><circle cx="118" cy="1345" r="4.4" fill="#393c3f"/><circle cx="118" cy="1345" r="3.2" fill="#5fb83f"/><path d="M154 1332V1327Q154 1325 156 1325H158Q160 1325 160 1327V1330" fill="none" stroke="#5ea447" stroke-width="2"/><rect x="157" y="1330" width="12" height="10" fill="#5b9847"/><text x="186" y="1342" font-size="26" fill="#9d7fb3" stroke="#9d7fb3" stroke-width="0.4">parameters</text><text x="527" y="1342" font-size="26" fill="#aab8c6" stroke="#aab8c6" stroke-width="0.4" text-anchor="end">List<tspan font-weight="bold">&lt;</tspan>Parameter<tspan font-weight="bold">&gt;</tspan></text><circle cx="131" cy="1376" r="14" fill="#8b78b6"/><path d="M127.9 1370V1385.8M127.9 1375.4A4.1 4.6 0 1 1 136.1 1375.4A4.1 4.6 0 1 1 127.9 1375.4" fill="none" stroke="#33293f" stroke-width="1.8"/><circle cx="118" cy="1380.5" r="4.6" fill="#393c3f"/><circle cx="118" cy="1380.5" r="3.2" fill="#ee6a2a"/><circle cx="118" cy="1389" r="4.4" fill="#393c3f"/><circle cx="118" cy="1389" r="3.2" fill="#5fb83f"/><path d="M154 1376V1371Q154 1369 156 1369H158Q160 1369 160 1371V1374" fill="none" stroke="#5ea447" stroke-width="2"/><rect x="157" y="1374" width="12" height="10" fill="#5b9847"/><text x="186" y="1386" font-size="26" fill="#9d7fb3" stroke="#9d7fb3" stroke-width="0.4">actionExecutor</text><text x="527" y="1386" font-size="26" fill="#aab8c6" stroke="#aab8c6" stroke-width="0.4" text-anchor="end">String</text><rect x="1139" y="1272" width="470" height="150" fill="#737373"/><rect x="1141" y="1274" width="466" height="56" fill="#3c3c3c"/><rect x="1141" y="1332" width="466" height="88" fill="#393c3f"/><circle cx="1260.0" cy="1302" r="14" fill="#3d88a4"/><path d="M1263.3 1298.4A4.7 4.7 0 1 0 1263.3 1305.1" fill="none" stroke="#1f3540" stroke-width="1.7"/><path d="M1283.0 1302V1297Q1283.0 1295 1285.0 1295H1287.0Q1289.0 1295 1289.0 1297V1300" fill="none" stroke="#5ea447" stroke-width="2"/><rect x="1286.0" y="1300" width="12" height="10" fill="#5b9847"/><text x="1321.5" y="1314" font-size="32" fill="#b6c3d2" stroke="#b6c3d2" stroke-width="0.4">CustomItem</text><circle cx="1165" cy="1354" r="14" fill="#8b78b6"/><path d="M1161.9 1348V1363.8M1161.9 1353.4A4.1 4.6 0 1 1 1170.1 1353.4A4.1 4.6 0 1 1 1161.9 1353.4" fill="none" stroke="#33293f" stroke-width="1.8"/><circle cx="1152" cy="1358.5" r="4.6" fill="#393c3f"/><circle cx="1152" cy="1358.5" r="3.2" fill="#ee6a2a"/><circle cx="1152" cy="1367" r="4.4" fill="#393c3f"/><circle cx="1152" cy="1367" r="3.2" fill="#5fb83f"/><path d="M1188 1354V1349Q1188 1347 1190 1347H1192Q1194 1347 1194 1349V1352" fill="none" stroke="#5ea447" stroke-width="2"/><rect x="1191" y="1352" width="12" height="10" fill="#5b9847"/><text x="1220" y="1364" font-size="26" fill="#9d7fb3" stroke="#9d7fb3" stroke-width="0.4">properties</text><text x="1597" y="1364" font-size="26" fill="#aab8c6" stroke="#aab8c6" stroke-width="0.4" text-anchor="end">Map<tspan font-weight="bold">&lt;</tspan>String<tspan fill="#cc7832" stroke="#cc7832" font-weight="bold">,</tspan> Object<tspan font-weight="bold">&gt;</tspan></text><circle cx="1165" cy="1398" r="14" fill="#8b78b6"/><path d="M1161.9 1392V1407.8M1161.9 1397.4A4.1 4.6 0 1 1 1170.1 1397.4A4.1 4.6 0 1 1 1161.9 1397.4" fill="none" stroke="#33293f" stroke-width="1.8"/><circle cx="1152" cy="1402.5" r="4.6" fill="#393c3f"/><circle cx="1152" cy="1402.5" r="3.2" fill="#ee6a2a"/><circle cx="1152" cy="1411" r="4.4" fill="#393c3f"/><circle cx="1152" cy="1411" r="3.2" fill="#5fb83f"/><path d="M1188 1398V1393Q1188 1391 1190 1391H1192Q1194 1391 1194 1393V1396" fill="none" stroke="#5ea447" stroke-width="2"/><rect x="1191" y="1396" width="12" height="10" fill="#5b9847"/><text x="1220" y="1408" font-size="26" fill="#9d7fb3" stroke="#9d7fb3" stroke-width="0.4">customItemType</text><text x="1597" y="1408" font-size="26" fill="#aab8c6" stroke="#aab8c6" stroke-width="0.4" text-anchor="end">String</text><rect x="1730" y="1308" width="454" height="282" fill="#737373"/><rect x="1732" y="1310" width="450" height="56" fill="#3c3c3c"/><rect x="1732" y="1368" width="450" height="220" fill="#393c3f"/><circle cx="1854.6" cy="1338" r="14" fill="#3d88a4"/><path d="M1857.8999999999999 1334.4A4.7 4.7 0 1 0 1857.8999999999999 1341.1" fill="none" stroke="#1f3540" stroke-width="1.7"/><path d="M1877.6 1338V1333Q1877.6 1331 1879.6 1331H1881.6Q1883.6 1331 1883.6 1333V1336" fill="none" stroke="#5ea447" stroke-width="2"/><rect x="1880.6" y="1336" width="12" height="10" fill="#5b9847"/><text x="1916.1" y="1350" font-size="32" fill="#b6c3d2" stroke="#b6c3d2" stroke-width="0.4">Parameter</text><circle cx="1756" cy="1390" r="14" fill="#8b78b6"/><path d="M1752.9 1384V1399.8M1752.9 1389.4A4.1 4.6 0 1 1 1761.1 1389.4A4.1 4.6 0 1 1 1752.9 1389.4" fill="none" stroke="#33293f" stroke-width="1.8"/><circle cx="1743" cy="1394.5" r="4.6" fill="#393c3f"/><circle cx="1743" cy="1394.5" r="3.2" fill="#ee6a2a"/><path d="M1779 1390V1385Q1779 1383 1781 1383H1783Q1785 1383 1785 1385V1388" fill="none" stroke="#5ea447" stroke-width="2"/><rect x="1782" y="1388" width="12" height="10" fill="#5b9847"/><text x="1811" y="1400" font-size="26" fill="#9d7fb3" stroke="#9d7fb3" stroke-width="0.4">choiceListInitializerFilter</text><rect x="1811" y="1391" width="276.0" height="2" fill="#9d7fb3"/><text x="2172" y="1400" font-size="26" fill="#aab8c6" stroke="#aab8c6" stroke-width="0.4" text-anchor="end">String</text><circle cx="1756" cy="1434" r="14" fill="#8b78b6"/><path d="M1752.9 1428V1443.8M1752.9 1433.4A4.1 4.6 0 1 1 1761.1 1433.4A4.1 4.6 0 1 1 1752.9 1433.4" fill="none" stroke="#33293f" stroke-width="1.8"/><circle cx="1743" cy="1447" r="4.4" fill="#393c3f"/><circle cx="1743" cy="1447" r="3.2" fill="#5fb83f"/><path d="M1779 1434V1429Q1779 1427 1781 1427H1783Q1785 1427 1785 1429V1432" fill="none" stroke="#5ea447" stroke-width="2"/><rect x="1782" y="1432" width="12" height="10" fill="#5b9847"/><text x="1811" y="1444" font-size="26" fill="#9d7fb3" stroke="#9d7fb3" stroke-width="0.4">multivalued</text><text x="2172" y="1444" font-size="26" fill="#aab8c6" stroke="#aab8c6" stroke-width="0.4" text-anchor="end"><tspan fill="#cc7832" stroke="#cc7832">boolean</tspan></text><circle cx="1756" cy="1478" r="14" fill="#8b78b6"/><path d="M1752.9 1472V1487.8M1752.9 1477.4A4.1 4.6 0 1 1 1761.1 1477.4A4.1 4.6 0 1 1 1752.9 1477.4" fill="none" stroke="#33293f" stroke-width="1.8"/><circle cx="1743" cy="1491" r="4.4" fill="#393c3f"/><circle cx="1743" cy="1491" r="3.2" fill="#5fb83f"/><path d="M1779 1478V1473Q1779 1471 1781 1471H1783Q1785 1471 1785 1473V1476" fill="none" stroke="#5ea447" stroke-width="2"/><rect x="1782" y="1476" width="12" height="10" fill="#5b9847"/><text x="1811" y="1488" font-size="26" fill="#9d7fb3" stroke="#9d7fb3" stroke-width="0.4">type</text><text x="2172" y="1488" font-size="26" fill="#aab8c6" stroke="#aab8c6" stroke-width="0.4" text-anchor="end">String</text><circle cx="1756" cy="1522" r="14" fill="#8b78b6"/><path d="M1752.9 1516V1531.8M1752.9 1521.4A4.1 4.6 0 1 1 1761.1 1521.4A4.1 4.6 0 1 1 1752.9 1521.4" fill="none" stroke="#33293f" stroke-width="1.8"/><circle cx="1743" cy="1526.5" r="4.6" fill="#393c3f"/><circle cx="1743" cy="1526.5" r="3.2" fill="#ee6a2a"/><circle cx="1743" cy="1535" r="4.4" fill="#393c3f"/><circle cx="1743" cy="1535" r="3.2" fill="#5fb83f"/><path d="M1779 1522V1517Q1779 1515 1781 1515H1783Q1785 1515 1785 1517V1520" fill="none" stroke="#5ea447" stroke-width="2"/><rect x="1782" y="1520" width="12" height="10" fill="#5b9847"/><text x="1811" y="1532" font-size="26" fill="#9d7fb3" stroke="#9d7fb3" stroke-width="0.4">defaultValue</text><text x="2172" y="1532" font-size="26" fill="#aab8c6" stroke="#aab8c6" stroke-width="0.4" text-anchor="end">String</text><circle cx="1756" cy="1566" r="14" fill="#8b78b6"/><path d="M1752.9 1560V1575.8M1752.9 1565.4A4.1 4.6 0 1 1 1761.1 1565.4A4.1 4.6 0 1 1 1752.9 1565.4" fill="none" stroke="#33293f" stroke-width="1.8"/><circle cx="1743" cy="1579" r="4.4" fill="#393c3f"/><circle cx="1743" cy="1579" r="3.2" fill="#5fb83f"/><path d="M1779 1566V1561Q1779 1559 1781 1559H1783Q1785 1559 1785 1561V1564" fill="none" stroke="#5ea447" stroke-width="2"/><rect x="1782" y="1564" width="12" height="10" fill="#5b9847"/><text x="1811" y="1576" font-size="26" fill="#9d7fb3" stroke="#9d7fb3" stroke-width="0.4">id</text><text x="2172" y="1576" font-size="26" fill="#aab8c6" stroke="#aab8c6" stroke-width="0.4" text-anchor="end">String</text><rect x="2265" y="1156" width="553" height="546" fill="#737373"/><rect x="2267" y="1158" width="549" height="56" fill="#3c3c3c"/><rect x="2267" y="1216" width="549" height="484" fill="#393c3f"/><circle cx="2456.8" cy="1186" r="14" fill="#3d88a4"/><path d="M2460.1000000000004 1182.4A4.7 4.7 0 1 0 2460.1000000000004 1189.1" fill="none" stroke="#1f3540" stroke-width="1.7"/><path d="M2479.8 1186V1181Q2479.8 1179 2481.8 1179H2483.8Q2485.8 1179 2485.8 1181V1184" fill="none" stroke="#5ea447" stroke-width="2"/><rect x="2482.8" y="1184" width="12" height="10" fill="#5b9847"/><text x="2518.3" y="1198" font-size="32" fill="#b6c3d2" stroke="#b6c3d2" stroke-width="0.4">Session</text><circle cx="2291" cy="1238" r="14" fill="#8b78b6"/><path d="M2287.9 1232V1247.8M2287.9 1237.4A4.1 4.6 0 1 1 2296.1 1237.4A4.1 4.6 0 1 1 2287.9 1237.4" fill="none" stroke="#33293f" stroke-width="1.8"/><circle cx="2278" cy="1242.5" r="4.6" fill="#393c3f"/><circle cx="2278" cy="1242.5" r="3.2" fill="#ee6a2a"/><circle cx="2278" cy="1251" r="4.4" fill="#393c3f"/><circle cx="2278" cy="1251" r="3.2" fill="#5fb83f"/><path d="M2314 1238V1233Q2314 1231 2316 1231H2318Q2320 1231 2320 1233V1236" fill="none" stroke="#5ea447" stroke-width="2"/><rect x="2317" y="1236" width="12" height="10" fill="#5b9847"/><text x="2346" y="1248" font-size="26" fill="#9d7fb3" stroke="#9d7fb3" stroke-width="0.4">originEventIds</text><text x="2806" y="1248" font-size="26" fill="#aab8c6" stroke="#aab8c6" stroke-width="0.4" text-anchor="end">List<tspan font-weight="bold">&lt;</tspan>String<tspan font-weight="bold">&gt;</tspan></text><circle cx="2291" cy="1282" r="14" fill="#8b78b6"/><path d="M2287.9 1276V1291.8M2287.9 1281.4A4.1 4.6 0 1 1 2296.1 1281.4A4.1 4.6 0 1 1 2287.9 1281.4" fill="none" stroke="#33293f" stroke-width="1.8"/><circle cx="2278" cy="1295" r="4.4" fill="#393c3f"/><circle cx="2278" cy="1295" r="3.2" fill="#5fb83f"/><path d="M2314 1282V1277Q2314 1275 2316 1275H2318Q2320 1275 2320 1277V1280" fill="none" stroke="#5ea447" stroke-width="2"/><rect x="2317" y="1280" width="12" height="10" fill="#5b9847"/><text x="2346" y="1292" font-size="26" fill="#9d7fb3" stroke="#9d7fb3" stroke-width="0.4">duration</text><text x="2806" y="1292" font-size="26" fill="#aab8c6" stroke="#aab8c6" stroke-width="0.4" text-anchor="end"><tspan fill="#cc7832" stroke="#cc7832">int</tspan></text><circle cx="2291" cy="1326" r="14" fill="#8b78b6"/><path d="M2287.9 1320V1335.8M2287.9 1325.4A4.1 4.6 0 1 1 2296.1 1325.4A4.1 4.6 0 1 1 2287.9 1325.4" fill="none" stroke="#33293f" stroke-width="1.8"/><circle cx="2278" cy="1330.5" r="4.6" fill="#393c3f"/><circle cx="2278" cy="1330.5" r="3.2" fill="#ee6a2a"/><circle cx="2278" cy="1339" r="4.4" fill="#393c3f"/><circle cx="2278" cy="1339" r="3.2" fill="#5fb83f"/><path d="M2314 1326V1321Q2314 1319 2316 1319H2318Q2320 1319 2320 1321V1324" fill="none" stroke="#5ea447" stroke-width="2"/><rect x="2317" y="1324" width="12" height="10" fill="#5b9847"/><text x="2346" y="1336" font-size="26" fill="#9d7fb3" stroke="#9d7fb3" stroke-width="0.4">size</text><text x="2806" y="1336" font-size="26" fill="#aab8c6" stroke="#aab8c6" stroke-width="0.4" text-anchor="end"><tspan fill="#cc7832" stroke="#cc7832">int</tspan></text><circle cx="2291" cy="1370" r="14" fill="#8b78b6"/><path d="M2287.9 1364V1379.8M2287.9 1369.4A4.1 4.6 0 1 1 2296.1 1369.4A4.1 4.6 0 1 1 2287.9 1369.4" fill="none" stroke="#33293f" stroke-width="1.8"/><circle cx="2278" cy="1374.5" r="4.6" fill="#393c3f"/><circle cx="2278" cy="1374.5" r="3.2" fill="#ee6a2a"/><circle cx="2278" cy="1383" r="4.4" fill="#393c3f"/><circle cx="2278" cy="1383" r="3.2" fill="#5fb83f"/><path d="M2314 1370V1365Q2314 1363 2316 1363H2318Q2320 1363 2320 1365V1368" fill="none" stroke="#5ea447" stroke-width="2"/><rect x="2317" y="1368" width="12" height="10" fill="#5b9847"/><text x="2346" y="1380" font-size="26" fill="#9d7fb3" stroke="#9d7fb3" stroke-width="0.4">lastEventDate</text><text x="2806" y="1380" font-size="26" fill="#aab8c6" stroke="#aab8c6" stroke-width="0.4" text-anchor="end">Date</text><circle cx="2291" cy="1414" r="14" fill="#8b78b6"/><path d="M2287.9 1408V1423.8M2287.9 1413.4A4.1 4.6 0 1 1 2296.1 1413.4A4.1 4.6 0 1 1 2287.9 1413.4" fill="none" stroke="#33293f" stroke-width="1.8"/><circle cx="2278" cy="1418.5" r="4.6" fill="#393c3f"/><circle cx="2278" cy="1418.5" r="3.2" fill="#ee6a2a"/><circle cx="2278" cy="1427" r="4.4" fill="#393c3f"/><circle cx="2278" cy="1427" r="3.2" fill="#5fb83f"/><path d="M2314 1414V1409Q2314 1407 2316 1407H2318Q2320 1407 2320 1409V1412" fill="none" stroke="#5ea447" stroke-width="2"/><rect x="2317" y="1412" width="12" height="10" fill="#5b9847"/><text x="2346" y="1424" font-size="26" fill="#9d7fb3" stroke="#9d7fb3" stroke-width="0.4">scope</text><text x="2806" y="1424" font-size="26" fill="#aab8c6" stroke="#aab8c6" stroke-width="0.4" text-anchor="end">String</text><circle cx="2291" cy="1458" r="14" fill="#8b78b6"/><path d="M2287.9 1452V1467.8M2287.9 1457.4A4.1 4.6 0 1 1 2296.1 1457.4A4.1 4.6 0 1 1 2287.9 1457.4" fill="none" stroke="#33293f" stroke-width="1.8"/><circle cx="2278" cy="1471" r="4.4" fill="#393c3f"/><circle cx="2278" cy="1471" r="3.2" fill="#5fb83f"/><path d="M2314 1458V1453Q2314 1451 2316 1451H2318Q2320 1451 2320 1453V1456" fill="none" stroke="#5ea447" stroke-width="2"/><rect x="2317" y="1456" width="12" height="10" fill="#5b9847"/><text x="2346" y="1468" font-size="26" fill="#9d7fb3" stroke="#9d7fb3" stroke-width="0.4">timeStamp</text><text x="2806" y="1468" font-size="26" fill="#aab8c6" stroke="#aab8c6" stroke-width="0.4" text-anchor="end">Date</text><circle cx="2291" cy="1502" r="14" fill="#8b78b6"/><path d="M2287.9 1496V1511.8M2287.9 1501.4A4.1 4.6 0 1 1 2296.1 1501.4A4.1 4.6 0 1 1 2287.9 1501.4" fill="none" stroke="#33293f" stroke-width="1.8"/><circle cx="2278" cy="1506.5" r="4.6" fill="#393c3f"/><circle cx="2278" cy="1506.5" r="3.2" fill="#ee6a2a"/><circle cx="2278" cy="1515" r="4.4" fill="#393c3f"/><circle cx="2278" cy="1515" r="3.2" fill="#5fb83f"/><path d="M2314 1502V1497Q2314 1495 2316 1495H2318Q2320 1495 2320 1497V1500" fill="none" stroke="#5ea447" stroke-width="2"/><rect x="2317" y="1500" width="12" height="10" fill="#5b9847"/><text x="2346" y="1512" font-size="26" fill="#9d7fb3" stroke="#9d7fb3" stroke-width="0.4">profile</text><text x="2806" y="1512" font-size="26" fill="#aab8c6" stroke="#aab8c6" stroke-width="0.4" text-anchor="end">Profile</text><circle cx="2291" cy="1546" r="14" fill="#8b78b6"/><path d="M2287.9 1540V1555.8M2287.9 1545.4A4.1 4.6 0 1 1 2296.1 1545.4A4.1 4.6 0 1 1 2287.9 1545.4" fill="none" stroke="#33293f" stroke-width="1.8"/><circle cx="2278" cy="1559" r="4.4" fill="#393c3f"/><circle cx="2278" cy="1559" r="3.2" fill="#5fb83f"/><path d="M2314 1546V1541Q2314 1539 2316 1539H2318Q2320 1539 2320 1541V1544" fill="none" stroke="#5ea447" stroke-width="2"/><rect x="2317" y="1544" width="12" height="10" fill="#5b9847"/><text x="2346" y="1556" font-size="26" fill="#9d7fb3" stroke="#9d7fb3" stroke-width="0.4">profileId</text><text x="2806" y="1556" font-size="26" fill="#aab8c6" stroke="#aab8c6" stroke-width="0.4" text-anchor="end">String</text><circle cx="2291" cy="1590" r="14" fill="#8b78b6"/><path d="M2287.9 1584V1599.8M2287.9 1589.4A4.1 4.6 0 1 1 2296.1 1589.4A4.1 4.6 0 1 1 2287.9 1589.4" fill="none" stroke="#33293f" stroke-width="1.8"/><circle cx="2278" cy="1594.5" r="4.6" fill="#393c3f"/><circle cx="2278" cy="1594.5" r="3.2" fill="#ee6a2a"/><circle cx="2278" cy="1603" r="4.4" fill="#393c3f"/><circle cx="2278" cy="1603" r="3.2" fill="#5fb83f"/><path d="M2314 1590V1585Q2314 1583 2316 1583H2318Q2320 1583 2320 1585V1588" fill="none" stroke="#5ea447" stroke-width="2"/><rect x="2317" y="1588" width="12" height="10" fill="#5b9847"/><text x="2346" y="1600" font-size="26" fill="#9d7fb3" stroke="#9d7fb3" stroke-width="0.4">properties</text><text x="2806" y="1600" font-size="26" fill="#aab8c6" stroke="#aab8c6" stroke-width="0.4" text-anchor="end">Map<tspan font-weight="bold">&lt;</tspan>String<tspan fill="#cc7832" stroke="#cc7832" font-weight="bold">,</tspan> Object<tspan font-weight="bold">&gt;</tspan></text><circle cx="2291" cy="1634" r="14" fill="#8b78b6"/><path d="M2287.9 1628V1643.8M2287.9 1633.4A4.1 4.6 0 1 1 2296.1 1633.4A4.1 4.6 0 1 1 2287.9 1633.4" fill="none" stroke="#33293f" stroke-width="1.8"/><circle cx="2278" cy="1638.5" r="4.6" fill="#393c3f"/><circle cx="2278" cy="1638.5" r="3.2" fill="#ee6a2a"/><circle cx="2278" cy="1647" r="4.4" fill="#393c3f"/><circle cx="2278" cy="1647" r="3.2" fill="#5fb83f"/><path d="M2314 1634V1629Q2314 1627 2316 1627H2318Q2320 1627 2320 1629V1632" fill="none" stroke="#5ea447" stroke-width="2"/><rect x="2317" y="1632" width="12" height="10" fill="#5b9847"/><text x="2346" y="1644" font-size="26" fill="#9d7fb3" stroke="#9d7fb3" stroke-width="0.4">originEventTypes</text><text x="2806" y="1644" font-size="26" fill="#aab8c6" stroke="#aab8c6" stroke-width="0.4" text-anchor="end">List<tspan font-weight="bold">&lt;</tspan>String<tspan font-weight="bold">&gt;</tspan></text><circle cx="2291" cy="1678" r="14" fill="#8b78b6"/><path d="M2287.9 1672V1687.8M2287.9 1677.4A4.1 4.6 0 1 1 2296.1 1677.4A4.1 4.6 0 1 1 2287.9 1677.4" fill="none" stroke="#33293f" stroke-width="1.8"/><circle cx="2278" cy="1682.5" r="4.6" fill="#393c3f"/><circle cx="2278" cy="1682.5" r="3.2" fill="#ee6a2a"/><circle cx="2278" cy="1691" r="4.4" fill="#393c3f"/><circle cx="2278" cy="1691" r="3.2" fill="#5fb83f"/><path d="M2314 1678V1673Q2314 1671 2316 1671H2318Q2320 1671 2320 1673V1676" fill="none" stroke="#5ea447" stroke-width="2"/><rect x="2317" y="1676" width="12" height="10" fill="#5b9847"/><text x="2346" y="1688" font-size="26" fill="#9d7fb3" stroke="#9d7fb3" stroke-width="0.4">systemProperties</text><text x="2806" y="1688" font-size="26" fill="#aab8c6" stroke="#aab8c6" stroke-width="0.4" text-anchor="end">Map<tspan font-weight="bold">&lt;</tspan>String<tspan fill="#cc7832" stroke="#cc7832" font-weight="bold">,</tspan> Object<tspan font-weight="bold">&gt;</tspan></text><rect x="49" y="1481" width="546" height="194" fill="#737373"/><rect x="51" y="1483" width="542" height="56" fill="#3c3c3c"/><rect x="51" y="1541" width="542" height="132" fill="#393c3f"/><circle cx="249.8" cy="1511" r="14" fill="#3d88a4"/><path d="M253.10000000000002 1507.4A4.7 4.7 0 1 0 253.10000000000002 1514.1" fill="none" stroke="#1f3540" stroke-width="1.7"/><path d="M272.8 1511V1506Q272.8 1504 274.8 1504H276.8Q278.8 1504 278.8 1506V1509" fill="none" stroke="#5ea447" stroke-width="2"/><rect x="275.8" y="1509" width="12" height="10" fill="#5b9847"/><text x="311.3" y="1523" font-size="32" fill="#b6c3d2" stroke="#b6c3d2" stroke-width="0.4">Action</text><circle cx="75" cy="1563" r="14" fill="#8b78b6"/><path d="M71.9 1557V1572.8M71.9 1562.4A4.1 4.6 0 1 1 80.1 1562.4A4.1 4.6 0 1 1 71.9 1562.4" fill="none" stroke="#33293f" stroke-width="1.8"/><circle cx="62" cy="1567.5" r="4.6" fill="#393c3f"/><circle cx="62" cy="1567.5" r="3.2" fill="#ee6a2a"/><circle cx="62" cy="1576" r="4.4" fill="#393c3f"/><circle cx="62" cy="1576" r="3.2" fill="#5fb83f"/><path d="M98 1563V1558Q98 1556 100 1556H102Q104 1556 104 1558V1561" fill="none" stroke="#5ea447" stroke-width="2"/><rect x="101" y="1561" width="12" height="10" fill="#5b9847"/><text x="130" y="1573" font-size="26" fill="#9d7fb3" stroke="#9d7fb3" stroke-width="0.4">actionType</text><text x="583" y="1573" font-size="26" fill="#aab8c6" stroke="#aab8c6" stroke-width="0.4" text-anchor="end">ActionType</text><circle cx="75" cy="1607" r="14" fill="#8b78b6"/><path d="M71.9 1601V1616.8M71.9 1606.4A4.1 4.6 0 1 1 80.1 1606.4A4.1 4.6 0 1 1 71.9 1606.4" fill="none" stroke="#33293f" stroke-width="1.8"/><circle cx="62" cy="1611.5" r="4.6" fill="#393c3f"/><circle cx="62" cy="1611.5" r="3.2" fill="#ee6a2a"/><circle cx="62" cy="1620" r="4.4" fill="#393c3f"/><circle cx="62" cy="1620" r="3.2" fill="#5fb83f"/><path d="M98 1607V1602Q98 1600 100 1600H102Q104 1600 104 1602V1605" fill="none" stroke="#5ea447" stroke-width="2"/><rect x="101" y="1605" width="12" height="10" fill="#5b9847"/><text x="130" y="1617" font-size="26" fill="#9d7fb3" stroke="#9d7fb3" stroke-width="0.4">actionTypeId</text><text x="583" y="1617" font-size="26" fill="#aab8c6" stroke="#aab8c6" stroke-width="0.4" text-anchor="end">String</text><circle cx="75" cy="1651" r="14" fill="#8b78b6"/><path d="M71.9 1645V1660.8M71.9 1650.4A4.1 4.6 0 1 1 80.1 1650.4A4.1 4.6 0 1 1 71.9 1650.4" fill="none" stroke="#33293f" stroke-width="1.8"/><circle cx="62" cy="1655.5" r="4.6" fill="#393c3f"/><circle cx="62" cy="1655.5" r="3.2" fill="#ee6a2a"/><circle cx="62" cy="1664" r="4.4" fill="#393c3f"/><circle cx="62" cy="1664" r="3.2" fill="#5fb83f"/><path d="M98 1651V1646Q98 1644 100 1644H102Q104 1644 104 1646V1649" fill="none" stroke="#5ea447" stroke-width="2"/><rect x="101" y="1649" width="12" height="10" fill="#5b9847"/><text x="130" y="1661" font-size="26" fill="#9d7fb3" stroke="#9d7fb3" stroke-width="0.4">parameterValues</text><text x="583" y="1661" font-size="26" fill="#aab8c6" stroke="#aab8c6" stroke-width="0.4" text-anchor="end">Map<tspan font-weight="bold">&lt;</tspan>String<tspan fill="#cc7832" stroke="#cc7832" font-weight="bold">,</tspan> Object<tspan font-weight="bold">&gt;</tspan></text><rect x="1001" y="1542" width="323" height="150" fill="#737373"/><rect x="1003" y="1544" width="319" height="56" fill="#3c3c3c"/><rect x="1003" y="1602" width="319" height="88" fill="#393c3f"/><path d="M1026.4 1562.4A14 14 0 0 0 1026.4 1581.6Z" fill="#9aa3aa"/><path d="M1047.4 1562.4A14 14 0 0 1 1047.4 1581.6Z" fill="#9aa3aa"/><path d="M1028.4 1564Q1028.4 1558 1036.9 1558Q1045.4 1558 1045.4 1564V1580Q1045.4 1586 1036.9 1586Q1028.4 1586 1028.4 1580Z" fill="#3d88a4"/><path d="M1040.2 1568.4A4.7 4.7 0 1 0 1040.2 1575.1" fill="none" stroke="#1f3540" stroke-width="1.7"/><path d="M1059.9 1572V1567Q1059.9 1565 1061.9 1565H1063.9Q1065.9 1565 1065.9 1567V1570" fill="none" stroke="#5ea447" stroke-width="2"/><rect x="1062.9" y="1570" width="12" height="10" fill="#5b9847"/><text x="1098.4" y="1584" font-size="32" fill="#b6c3d2" stroke="#b6c3d2" stroke-width="0.4">MetadataItem</text><circle cx="1027" cy="1624" r="14" fill="#8b78b6"/><path d="M1023.9 1618V1633.8M1023.9 1623.4A4.1 4.6 0 1 1 1032.1 1623.4A4.1 4.6 0 1 1 1023.9 1623.4" fill="none" stroke="#33293f" stroke-width="1.8"/><circle cx="1014" cy="1628.5" r="4.6" fill="#393c3f"/><circle cx="1014" cy="1628.5" r="3.2" fill="#ee6a2a"/><circle cx="1014" cy="1637" r="4.4" fill="#393c3f"/><circle cx="1014" cy="1637" r="3.2" fill="#5fb83f"/><path d="M1050 1624V1619Q1050 1617 1052 1617H1054Q1056 1617 1056 1619V1622" fill="none" stroke="#5ea447" stroke-width="2"/><rect x="1053" y="1622" width="12" height="10" fill="#5b9847"/><text x="1082" y="1634" font-size="26" fill="#9d7fb3" stroke="#9d7fb3" stroke-width="0.4">metadata</text><text x="1312" y="1634" font-size="26" fill="#aab8c6" stroke="#aab8c6" stroke-width="0.4" text-anchor="end">Metadata</text><circle cx="1027" cy="1668" r="14" fill="#8b78b6"/><path d="M1023.9 1662V1677.8M1023.9 1667.4A4.1 4.6 0 1 1 1032.1 1667.4A4.1 4.6 0 1 1 1023.9 1667.4" fill="none" stroke="#33293f" stroke-width="1.8"/><circle cx="1014" cy="1681" r="4.4" fill="#393c3f"/><circle cx="1014" cy="1681" r="3.2" fill="#5fb83f"/><path d="M1050 1668V1663Q1050 1661 1052 1661H1054Q1056 1661 1056 1663V1666" fill="none" stroke="#5ea447" stroke-width="2"/><rect x="1053" y="1666" width="12" height="10" fill="#5b9847"/><text x="1082" y="1678" font-size="26" fill="#9d7fb3" stroke="#9d7fb3" stroke-width="0.4">scope</text><text x="1312" y="1678" font-size="26" fill="#aab8c6" stroke="#aab8c6" stroke-width="0.4" text-anchor="end">String</text><rect x="1740" y="1670" width="434" height="238" fill="#737373"/><rect x="1742" y="1672" width="430" height="56" fill="#3c3c3c"/><rect x="1742" y="1730" width="430" height="176" fill="#393c3f"/><circle cx="1826.1" cy="1700" r="14" fill="#3d88a4"/><path d="M1829.3999999999999 1696.4A4.7 4.7 0 1 0 1829.3999999999999 1703.1" fill="none" stroke="#1f3540" stroke-width="1.7"/><path d="M1849.1 1700V1695Q1849.1 1693 1851.1 1693H1853.1Q1855.1 1693 1855.1 1695V1698" fill="none" stroke="#5ea447" stroke-width="2"/><rect x="1852.1" y="1698" width="12" height="10" fill="#5b9847"/><text x="1887.6" y="1712" font-size="32" fill="#b6c3d2" stroke="#b6c3d2" stroke-width="0.4">ConditionType</text><circle cx="1766" cy="1752" r="14" fill="#8b78b6"/><path d="M1762.9 1746V1761.8M1762.9 1751.4A4.1 4.6 0 1 1 1771.1 1751.4A4.1 4.6 0 1 1 1762.9 1751.4" fill="none" stroke="#33293f" stroke-width="1.8"/><circle cx="1753" cy="1756.5" r="4.6" fill="#393c3f"/><circle cx="1753" cy="1756.5" r="3.2" fill="#ee6a2a"/><circle cx="1753" cy="1765" r="4.4" fill="#393c3f"/><circle cx="1753" cy="1765" r="3.2" fill="#5fb83f"/><path d="M1789 1752V1747Q1789 1745 1791 1745H1793Q1795 1745 1795 1747V1750" fill="none" stroke="#5ea447" stroke-width="2"/><rect x="1792" y="1750" width="12" height="10" fill="#5b9847"/><text x="1821" y="1762" font-size="26" fill="#9d7fb3" stroke="#9d7fb3" stroke-width="0.4">parameters</text><text x="2162" y="1762" font-size="26" fill="#aab8c6" stroke="#aab8c6" stroke-width="0.4" text-anchor="end">List<tspan font-weight="bold">&lt;</tspan>Parameter<tspan font-weight="bold">&gt;</tspan></text><circle cx="1766" cy="1796" r="14" fill="#8b78b6"/><path d="M1762.9 1790V1805.8M1762.9 1795.4A4.1 4.6 0 1 1 1771.1 1795.4A4.1 4.6 0 1 1 1762.9 1795.4" fill="none" stroke="#33293f" stroke-width="1.8"/><circle cx="1753" cy="1800.5" r="4.6" fill="#393c3f"/><circle cx="1753" cy="1800.5" r="3.2" fill="#ee6a2a"/><circle cx="1753" cy="1809" r="4.4" fill="#393c3f"/><circle cx="1753" cy="1809" r="3.2" fill="#5fb83f"/><path d="M1789 1796V1791Q1789 1789 1791 1789H1793Q1795 1789 1795 1791V1794" fill="none" stroke="#5ea447" stroke-width="2"/><rect x="1792" y="1794" width="12" height="10" fill="#5b9847"/><text x="1821" y="1806" font-size="26" fill="#9d7fb3" stroke="#9d7fb3" stroke-width="0.4">conditionEvaluator</text><text x="2162" y="1806" font-size="26" fill="#aab8c6" stroke="#aab8c6" stroke-width="0.4" text-anchor="end">String</text><circle cx="1766" cy="1840" r="14" fill="#8b78b6"/><path d="M1762.9 1834V1849.8M1762.9 1839.4A4.1 4.6 0 1 1 1771.1 1839.4A4.1 4.6 0 1 1 1762.9 1839.4" fill="none" stroke="#33293f" stroke-width="1.8"/><circle cx="1753" cy="1844.5" r="4.6" fill="#393c3f"/><circle cx="1753" cy="1844.5" r="3.2" fill="#ee6a2a"/><circle cx="1753" cy="1853" r="4.4" fill="#393c3f"/><circle cx="1753" cy="1853" r="3.2" fill="#5fb83f"/><path d="M1789 1840V1835Q1789 1833 1791 1833H1793Q1795 1833 1795 1835V1838" fill="none" stroke="#5ea447" stroke-width="2"/><rect x="1792" y="1838" width="12" height="10" fill="#5b9847"/><text x="1821" y="1850" font-size="26" fill="#9d7fb3" stroke="#9d7fb3" stroke-width="0.4">queryBuilder</text><text x="2162" y="1850" font-size="26" fill="#aab8c6" stroke="#aab8c6" stroke-width="0.4" text-anchor="end">String</text><circle cx="1766" cy="1884" r="14" fill="#8b78b6"/><path d="M1762.9 1878V1893.8M1762.9 1883.4A4.1 4.6 0 1 1 1771.1 1883.4A4.1 4.6 0 1 1 1762.9 1883.4" fill="none" stroke="#33293f" stroke-width="1.8"/><circle cx="1753" cy="1888.5" r="4.6" fill="#393c3f"/><circle cx="1753" cy="1888.5" r="3.2" fill="#ee6a2a"/><circle cx="1753" cy="1897" r="4.4" fill="#393c3f"/><circle cx="1753" cy="1897" r="3.2" fill="#5fb83f"/><path d="M1789 1884V1879Q1789 1877 1791 1877H1793Q1795 1877 1795 1879V1882" fill="none" stroke="#5ea447" stroke-width="2"/><rect x="1792" y="1882" width="12" height="10" fill="#5b9847"/><text x="1821" y="1894" font-size="26" fill="#9d7fb3" stroke="#9d7fb3" stroke-width="0.4">parentCondition</text><text x="2162" y="1894" font-size="26" fill="#aab8c6" stroke="#aab8c6" stroke-width="0.4" text-anchor="end">Condition</text><rect x="2898" y="1646" width="220" height="56" fill="#737373"/><rect x="2900" y="1648" width="216" height="52" fill="#3c3c3c"/><circle cx="2922" cy="1674" r="14" fill="#3d88a4"/><path d="M2925.3 1670.4A4.7 4.7 0 1 0 2925.3 1677.1" fill="none" stroke="#1f3540" stroke-width="1.7"/><path d="M2945 1674V1669Q2945 1667 2947 1667H2949Q2951 1667 2951 1669V1672" fill="none" stroke="#5ea447" stroke-width="2"/><rect x="2948" y="1672" width="12" height="10" fill="#5b9847"/><text x="2984" y="1686" font-size="32" fill="#b6c3d2" stroke="#b6c3d2" stroke-width="0.4">Persona</text><rect x="3239" y="1596" width="367" height="106" fill="#737373"/><rect x="3241" y="1598" width="363" height="56" fill="#3c3c3c"/><rect x="3241" y="1656" width="363" height="44" fill="#393c3f"/><circle cx="3266.7" cy="1626" r="14" fill="#4f8d3e"/><path d="M3263.7 1620H3269.7M3266.7 1620V1632M3263.7 1632H3269.7" fill="none" stroke="#203818" stroke-width="1.8"/><path d="M3289.7 1626V1621Q3289.7 1619 3291.7 1619H3293.7Q3295.7 1619 3295.7 1621V1624" fill="none" stroke="#5ea447" stroke-width="2"/><rect x="3292.7" y="1624" width="12" height="10" fill="#5b9847"/><text x="3328.2" y="1638" font-size="32" fill="#b6c3d2" stroke="#b6c3d2" stroke-width="0.4">TimestampedItem</text><circle cx="3265" cy="1678" r="14" fill="#8b78b6"/><path d="M3261.9 1672V1687.8M3261.9 1677.4A4.1 4.6 0 1 1 3270.1 1677.4A4.1 4.6 0 1 1 3261.9 1677.4" fill="none" stroke="#33293f" stroke-width="1.8"/><circle cx="3252" cy="1691" r="4.4" fill="#393c3f"/><circle cx="3252" cy="1691" r="3.2" fill="#5fb83f"/><path d="M3288 1678V1673Q3288 1671 3290 1671H3292Q3294 1671 3294 1673V1676" fill="none" stroke="#5ea447" stroke-width="2"/><rect x="3291" y="1676" width="12" height="10" fill="#5b9847"/><text x="3320" y="1688" font-size="26" fill="#9d7fb3" stroke="#9d7fb3" stroke-width="0.4">timeStamp</text><text x="3594" y="1688" font-size="26" fill="#aab8c6" stroke="#aab8c6" stroke-width="0.4" text-anchor="end">Date</text><rect x="40" y="1754" width="564" height="370" fill="#737373"/><rect x="42" y="1756" width="560" height="56" fill="#3c3c3c"/><rect x="42" y="1814" width="560" height="308" fill="#393c3f"/><circle cx="261.3" cy="1784" r="14" fill="#3d88a4"/><path d="M264.6 1780.4A4.7 4.7 0 1 0 264.6 1787.1" fill="none" stroke="#1f3540" stroke-width="1.7"/><path d="M284.3 1784V1779Q284.3 1777 286.3 1777H288.3Q290.3 1777 290.3 1779V1782" fill="none" stroke="#5ea447" stroke-width="2"/><rect x="287.3" y="1782" width="12" height="10" fill="#5b9847"/><text x="322.8" y="1796" font-size="32" fill="#b6c3d2" stroke="#b6c3d2" stroke-width="0.4">Rule</text><circle cx="66" cy="1836" r="14" fill="#8b78b6"/><path d="M62.9 1830V1845.8M62.9 1835.4A4.1 4.6 0 1 1 71.1 1835.4A4.1 4.6 0 1 1 62.9 1835.4" fill="none" stroke="#33293f" stroke-width="1.8"/><circle cx="53" cy="1840.5" r="4.6" fill="#393c3f"/><circle cx="53" cy="1840.5" r="3.2" fill="#ee6a2a"/><circle cx="53" cy="1849" r="4.4" fill="#393c3f"/><circle cx="53" cy="1849" r="3.2" fill="#5fb83f"/><path d="M89 1836V1831Q89 1829 91 1829H93Q95 1829 95 1831V1834" fill="none" stroke="#5ea447" stroke-width="2"/><rect x="92" y="1834" width="12" height="10" fill="#5b9847"/><text x="121" y="1846" font-size="26" fill="#9d7fb3" stroke="#9d7fb3" stroke-width="0.4">linkedItems</text><text x="592" y="1846" font-size="26" fill="#aab8c6" stroke="#aab8c6" stroke-width="0.4" text-anchor="end">List<tspan font-weight="bold">&lt;</tspan>String<tspan font-weight="bold">&gt;</tspan></text><circle cx="66" cy="1880" r="14" fill="#8b78b6"/><path d="M62.9 1874V1889.8M62.9 1879.4A4.1 4.6 0 1 1 71.1 1879.4A4.1 4.6 0 1 1 62.9 1879.4" fill="none" stroke="#33293f" stroke-width="1.8"/><circle cx="53" cy="1884.5" r="4.6" fill="#393c3f"/><circle cx="53" cy="1884.5" r="3.2" fill="#ee6a2a"/><circle cx="53" cy="1893" r="4.4" fill="#393c3f"/><circle cx="53" cy="1893" r="3.2" fill="#5fb83f"/><path d="M89 1880V1875Q89 1873 91 1873H93Q95 1873 95 1875V1878" fill="none" stroke="#5ea447" stroke-width="2"/><rect x="92" y="1878" width="12" height="10" fill="#5b9847"/><text x="121" y="1890" font-size="26" fill="#9d7fb3" stroke="#9d7fb3" stroke-width="0.4">raiseEventOnlyOnceForProfile</text><text x="592" y="1890" font-size="26" fill="#aab8c6" stroke="#aab8c6" stroke-width="0.4" text-anchor="end"><tspan fill="#cc7832" stroke="#cc7832">boolean</tspan></text><circle cx="66" cy="1924" r="14" fill="#8b78b6"/><path d="M62.9 1918V1933.8M62.9 1923.4A4.1 4.6 0 1 1 71.1 1923.4A4.1 4.6 0 1 1 62.9 1923.4" fill="none" stroke="#33293f" stroke-width="1.8"/><circle cx="53" cy="1928.5" r="4.6" fill="#393c3f"/><circle cx="53" cy="1928.5" r="3.2" fill="#ee6a2a"/><circle cx="53" cy="1937" r="4.4" fill="#393c3f"/><circle cx="53" cy="1937" r="3.2" fill="#5fb83f"/><path d="M89 1924V1919Q89 1917 91 1917H93Q95 1917 95 1919V1922" fill="none" stroke="#5ea447" stroke-width="2"/><rect x="92" y="1922" width="12" height="10" fill="#5b9847"/><text x="121" y="1934" font-size="26" fill="#9d7fb3" stroke="#9d7fb3" stroke-width="0.4">raiseEventOnlyOnceForSession</text><text x="592" y="1934" font-size="26" fill="#aab8c6" stroke="#aab8c6" stroke-width="0.4" text-anchor="end"><tspan fill="#cc7832" stroke="#cc7832">boolean</tspan></text><circle cx="66" cy="1968" r="14" fill="#8b78b6"/><path d="M62.9 1962V1977.8M62.9 1967.4A4.1 4.6 0 1 1 71.1 1967.4A4.1 4.6 0 1 1 62.9 1967.4" fill="none" stroke="#33293f" stroke-width="1.8"/><circle cx="53" cy="1972.5" r="4.6" fill="#393c3f"/><circle cx="53" cy="1972.5" r="3.2" fill="#ee6a2a"/><circle cx="53" cy="1981" r="4.4" fill="#393c3f"/><circle cx="53" cy="1981" r="3.2" fill="#5fb83f"/><path d="M89 1968V1963Q89 1961 91 1961H93Q95 1961 95 1963V1966" fill="none" stroke="#5ea447" stroke-width="2"/><rect x="92" y="1966" width="12" height="10" fill="#5b9847"/><text x="121" y="1978" font-size="26" fill="#9d7fb3" stroke="#9d7fb3" stroke-width="0.4">raiseEventOnlyOnce</text><text x="592" y="1978" font-size="26" fill="#aab8c6" stroke="#aab8c6" stroke-width="0.4" text-anchor="end"><tspan fill="#cc7832" stroke="#cc7832">boolean</tspan></text><circle cx="66" cy="2012" r="14" fill="#8b78b6"/><path d="M62.9 2006V2021.8M62.9 2011.4A4.1 4.6 0 1 1 71.1 2011.4A4.1 4.6 0 1 1 62.9 2011.4" fill="none" stroke="#33293f" stroke-width="1.8"/><circle cx="53" cy="2016.5" r="4.6" fill="#393c3f"/><circle cx="53" cy="2016.5" r="3.2" fill="#ee6a2a"/><circle cx="53" cy="2025" r="4.4" fill="#393c3f"/><circle cx="53" cy="2025" r="3.2" fill="#5fb83f"/><path d="M89 2012V2007Q89 2005 91 2005H93Q95 2005 95 2007V2010" fill="none" stroke="#5ea447" stroke-width="2"/><rect x="92" y="2010" width="12" height="10" fill="#5b9847"/><text x="121" y="2022" font-size="26" fill="#9d7fb3" stroke="#9d7fb3" stroke-width="0.4">actions</text><text x="592" y="2022" font-size="26" fill="#aab8c6" stroke="#aab8c6" stroke-width="0.4" text-anchor="end">List<tspan font-weight="bold">&lt;</tspan>Action<tspan font-weight="bold">&gt;</tspan></text><circle cx="66" cy="2056" r="14" fill="#8b78b6"/><path d="M62.9 2050V2065.8M62.9 2055.4A4.1 4.6 0 1 1 71.1 2055.4A4.1 4.6 0 1 1 62.9 2055.4" fill="none" stroke="#33293f" stroke-width="1.8"/><circle cx="53" cy="2060.5" r="4.6" fill="#393c3f"/><circle cx="53" cy="2060.5" r="3.2" fill="#ee6a2a"/><circle cx="53" cy="2069" r="4.4" fill="#393c3f"/><circle cx="53" cy="2069" r="3.2" fill="#5fb83f"/><path d="M89 2056V2051Q89 2049 91 2049H93Q95 2049 95 2051V2054" fill="none" stroke="#5ea447" stroke-width="2"/><rect x="92" y="2054" width="12" height="10" fill="#5b9847"/><text x="121" y="2066" font-size="26" fill="#9d7fb3" stroke="#9d7fb3" stroke-width="0.4">condition</text><text x="592" y="2066" font-size="26" fill="#aab8c6" stroke="#aab8c6" stroke-width="0.4" text-anchor="end">Condition</text><circle cx="66" cy="2100" r="14" fill="#8b78b6"/><path d="M62.9 2094V2109.8M62.9 2099.4A4.1 4.6 0 1 1 71.1 2099.4A4.1 4.6 0 1 1 62.9 2099.4" fill="none" stroke="#33293f" stroke-width="1.8"/><circle cx="53" cy="2104.5" r="4.6" fill="#393c3f"/><circle cx="53" cy="2104.5" r="3.2" fill="#ee6a2a"/><circle cx="53" cy="2113" r="4.4" fill="#393c3f"/><circle cx="53" cy="2113" r="3.2" fill="#5fb83f"/><path d="M89 2100V2095Q89 2093 91 2093H93Q95 2093 95 2095V2098" fill="none" stroke="#5ea447" stroke-width="2"/><rect x="92" y="2098" width="12" height="10" fill="#5b9847"/><text x="121" y="2110" font-size="26" fill="#9d7fb3" stroke="#9d7fb3" stroke-width="0.4">priority</text><text x="592" y="2110" font-size="26" fill="#aab8c6" stroke="#aab8c6" stroke-width="0.4" text-anchor="end"><tspan fill="#cc7832" stroke="#cc7832">int</tspan></text><rect x="811" y="1812" width="388" height="370" fill="#737373"/><rect x="813" y="1814" width="384" height="56" fill="#3c3c3c"/><rect x="813" y="1872" width="384" height="308" fill="#393c3f"/><circle cx="904.3" cy="1842" r="14" fill="#3d88a4"/><path d="M907.5999999999999 1838.4A4.7 4.7 0 1 0 907.5999999999999 1845.1" fill="none" stroke="#1f3540" stroke-width="1.7"/><path d="M927.3 1842V1837Q927.3 1835 929.3 1835H931.3Q933.3 1835 933.3 1837V1840" fill="none" stroke="#5ea447" stroke-width="2"/><rect x="930.3" y="1840" width="12" height="10" fill="#5b9847"/><text x="965.8" y="1854" font-size="32" fill="#b6c3d2" stroke="#b6c3d2" stroke-width="0.4">Campaign</text><circle cx="837" cy="1894" r="14" fill="#8b78b6"/><path d="M833.9 1888V1903.8M833.9 1893.4A4.1 4.6 0 1 1 842.1 1893.4A4.1 4.6 0 1 1 833.9 1893.4" fill="none" stroke="#33293f" stroke-width="1.8"/><circle cx="824" cy="1898.5" r="4.6" fill="#393c3f"/><circle cx="824" cy="1898.5" r="3.2" fill="#ee6a2a"/><circle cx="824" cy="1907" r="4.4" fill="#393c3f"/><circle cx="824" cy="1907" r="3.2" fill="#5fb83f"/><path d="M860 1894V1889Q860 1887 862 1887H864Q866 1887 866 1889V1892" fill="none" stroke="#5ea447" stroke-width="2"/><rect x="863" y="1892" width="12" height="10" fill="#5b9847"/><text x="892" y="1904" font-size="26" fill="#9d7fb3" stroke="#9d7fb3" stroke-width="0.4">primaryGoal</text><text x="1187" y="1904" font-size="26" fill="#aab8c6" stroke="#aab8c6" stroke-width="0.4" text-anchor="end">String</text><circle cx="837" cy="1938" r="14" fill="#8b78b6"/><path d="M833.9 1932V1947.8M833.9 1937.4A4.1 4.6 0 1 1 842.1 1937.4A4.1 4.6 0 1 1 833.9 1937.4" fill="none" stroke="#33293f" stroke-width="1.8"/><circle cx="824" cy="1942.5" r="4.6" fill="#393c3f"/><circle cx="824" cy="1942.5" r="3.2" fill="#ee6a2a"/><circle cx="824" cy="1951" r="4.4" fill="#393c3f"/><circle cx="824" cy="1951" r="3.2" fill="#5fb83f"/><path d="M860 1938V1933Q860 1931 862 1931H864Q866 1931 866 1933V1936" fill="none" stroke="#5ea447" stroke-width="2"/><rect x="863" y="1936" width="12" height="10" fill="#5b9847"/><text x="892" y="1948" font-size="26" fill="#9d7fb3" stroke="#9d7fb3" stroke-width="0.4">endDate</text><text x="1187" y="1948" font-size="26" fill="#aab8c6" stroke="#aab8c6" stroke-width="0.4" text-anchor="end">Date</text><circle cx="837" cy="1982" r="14" fill="#8b78b6"/><path d="M833.9 1976V1991.8M833.9 1981.4A4.1 4.6 0 1 1 842.1 1981.4A4.1 4.6 0 1 1 833.9 1981.4" fill="none" stroke="#33293f" stroke-width="1.8"/><circle cx="824" cy="1986.5" r="4.6" fill="#393c3f"/><circle cx="824" cy="1986.5" r="3.2" fill="#ee6a2a"/><circle cx="824" cy="1995" r="4.4" fill="#393c3f"/><circle cx="824" cy="1995" r="3.2" fill="#5fb83f"/><path d="M860 1982V1977Q860 1975 862 1975H864Q866 1975 866 1977V1980" fill="none" stroke="#5ea447" stroke-width="2"/><rect x="863" y="1980" width="12" height="10" fill="#5b9847"/><text x="892" y="1992" font-size="26" fill="#9d7fb3" stroke="#9d7fb3" stroke-width="0.4">entryCondition</text><text x="1187" y="1992" font-size="26" fill="#aab8c6" stroke="#aab8c6" stroke-width="0.4" text-anchor="end">Condition</text><circle cx="837" cy="2026" r="14" fill="#8b78b6"/><path d="M833.9 2020V2035.8M833.9 2025.4A4.1 4.6 0 1 1 842.1 2025.4A4.1 4.6 0 1 1 833.9 2025.4" fill="none" stroke="#33293f" stroke-width="1.8"/><circle cx="824" cy="2030.5" r="4.6" fill="#393c3f"/><circle cx="824" cy="2030.5" r="3.2" fill="#ee6a2a"/><circle cx="824" cy="2039" r="4.4" fill="#393c3f"/><circle cx="824" cy="2039" r="3.2" fill="#5fb83f"/><path d="M860 2026V2021Q860 2019 862 2019H864Q866 2019 866 2021V2024" fill="none" stroke="#5ea447" stroke-width="2"/><rect x="863" y="2024" width="12" height="10" fill="#5b9847"/><text x="892" y="2036" font-size="26" fill="#9d7fb3" stroke="#9d7fb3" stroke-width="0.4">cost</text><text x="1187" y="2036" font-size="26" fill="#aab8c6" stroke="#aab8c6" stroke-width="0.4" text-anchor="end">Double</text><circle cx="837" cy="2070" r="14" fill="#8b78b6"/><path d="M833.9 2064V2079.8M833.9 2069.4A4.1 4.6 0 1 1 842.1 2069.4A4.1 4.6 0 1 1 833.9 2069.4" fill="none" stroke="#33293f" stroke-width="1.8"/><circle cx="824" cy="2074.5" r="4.6" fill="#393c3f"/><circle cx="824" cy="2074.5" r="3.2" fill="#ee6a2a"/><circle cx="824" cy="2083" r="4.4" fill="#393c3f"/><circle cx="824" cy="2083" r="3.2" fill="#5fb83f"/><path d="M860 2070V2065Q860 2063 862 2063H864Q866 2063 866 2065V2068" fill="none" stroke="#5ea447" stroke-width="2"/><rect x="863" y="2068" width="12" height="10" fill="#5b9847"/><text x="892" y="2080" font-size="26" fill="#9d7fb3" stroke="#9d7fb3" stroke-width="0.4">startDate</text><text x="1187" y="2080" font-size="26" fill="#aab8c6" stroke="#aab8c6" stroke-width="0.4" text-anchor="end">Date</text><circle cx="837" cy="2114" r="14" fill="#8b78b6"/><path d="M833.9 2108V2123.8M833.9 2113.4A4.1 4.6 0 1 1 842.1 2113.4A4.1 4.6 0 1 1 833.9 2113.4" fill="none" stroke="#33293f" stroke-width="1.8"/><circle cx="824" cy="2118.5" r="4.6" fill="#393c3f"/><circle cx="824" cy="2118.5" r="3.2" fill="#ee6a2a"/><circle cx="824" cy="2127" r="4.4" fill="#393c3f"/><circle cx="824" cy="2127" r="3.2" fill="#5fb83f"/><path d="M860 2114V2109Q860 2107 862 2107H864Q866 2107 866 2109V2112" fill="none" stroke="#5ea447" stroke-width="2"/><rect x="863" y="2112" width="12" height="10" fill="#5b9847"/><text x="892" y="2124" font-size="26" fill="#9d7fb3" stroke="#9d7fb3" stroke-width="0.4">timezone</text><text x="1187" y="2124" font-size="26" fill="#aab8c6" stroke="#aab8c6" stroke-width="0.4" text-anchor="end">String</text><circle cx="837" cy="2158" r="14" fill="#8b78b6"/><path d="M833.9 2152V2167.8M833.9 2157.4A4.1 4.6 0 1 1 842.1 2157.4A4.1 4.6 0 1 1 833.9 2157.4" fill="none" stroke="#33293f" stroke-width="1.8"/><circle cx="824" cy="2162.5" r="4.6" fill="#393c3f"/><circle cx="824" cy="2162.5" r="3.2" fill="#ee6a2a"/><circle cx="824" cy="2171" r="4.4" fill="#393c3f"/><circle cx="824" cy="2171" r="3.2" fill="#5fb83f"/><path d="M860 2158V2153Q860 2151 862 2151H864Q866 2151 866 2153V2156" fill="none" stroke="#5ea447" stroke-width="2"/><rect x="863" y="2156" width="12" height="10" fill="#5b9847"/><text x="892" y="2168" font-size="26" fill="#9d7fb3" stroke="#9d7fb3" stroke-width="0.4">currency</text><text x="1187" y="2168" font-size="26" fill="#aab8c6" stroke="#aab8c6" stroke-width="0.4" text-anchor="end">String</text><rect x="2610" y="1862" width="650" height="634" fill="#737373"/><rect x="2612" y="1864" width="646" height="56" fill="#3c3c3c"/><rect x="2612" y="1922" width="646" height="572" fill="#393c3f"/><circle cx="2866.3" cy="1892" r="14" fill="#3d88a4"/><path d="M2869.6000000000004 1888.4A4.7 4.7 0 1 0 2869.6000000000004 1895.1" fill="none" stroke="#1f3540" stroke-width="1.7"/><path d="M2889.3 1892V1887Q2889.3 1885 2891.3 1885H2893.3Q2895.3 1885 2895.3 1887V1890" fill="none" stroke="#5ea447" stroke-width="2"/><rect x="2892.3" y="1890" width="12" height="10" fill="#5b9847"/><text x="2927.8" y="1904" font-size="32" fill="#b6c3d2" stroke="#b6c3d2" stroke-width="0.4">Event</text><circle cx="2636" cy="1944" r="14" fill="#8b78b6"/><path d="M2632.9 1938V1953.8M2632.9 1943.4A4.1 4.6 0 1 1 2641.1 1943.4A4.1 4.6 0 1 1 2632.9 1943.4" fill="none" stroke="#33293f" stroke-width="1.8"/><circle cx="2623" cy="1948.5" r="4.6" fill="#393c3f"/><circle cx="2623" cy="1948.5" r="3.2" fill="#ee6a2a"/><circle cx="2623" cy="1957" r="4.4" fill="#393c3f"/><circle cx="2623" cy="1957" r="3.2" fill="#5fb83f"/><path d="M2659 1944V1939Q2659 1937 2661 1937H2663Q2665 1937 2665 1939V1942" fill="none" stroke="#5ea447" stroke-width="2"/><rect x="2662" y="1942" width="12" height="10" fill="#5b9847"/><text x="2691" y="1954" font-size="26" fill="#9d7fb3" stroke="#9d7fb3" stroke-width="0.4">actionPostExecutors</text><text x="3248" y="1954" font-size="26" fill="#aab8c6" stroke="#aab8c6" stroke-width="0.4" text-anchor="end">List<tspan font-weight="bold">&lt;</tspan>ActionPostExecutor<tspan font-weight="bold">&gt;</tspan></text><circle cx="2636" cy="1988" r="14" fill="#8b78b6"/><path d="M2632.9 1982V1997.8M2632.9 1987.4A4.1 4.6 0 1 1 2641.1 1987.4A4.1 4.6 0 1 1 2632.9 1987.4" fill="none" stroke="#33293f" stroke-width="1.8"/><circle cx="2623" cy="1992.5" r="4.6" fill="#393c3f"/><circle cx="2623" cy="1992.5" r="3.2" fill="#ee6a2a"/><circle cx="2623" cy="2001" r="4.4" fill="#393c3f"/><circle cx="2623" cy="2001" r="3.2" fill="#5fb83f"/><path d="M2659 1988V1983Q2659 1981 2661 1981H2663Q2665 1981 2665 1983V1986" fill="none" stroke="#5ea447" stroke-width="2"/><rect x="2662" y="1986" width="12" height="10" fill="#5b9847"/><text x="2691" y="1998" font-size="26" fill="#9d7fb3" stroke="#9d7fb3" stroke-width="0.4">sessionId</text><text x="3248" y="1998" font-size="26" fill="#aab8c6" stroke="#aab8c6" stroke-width="0.4" text-anchor="end">String</text><circle cx="2636" cy="2032" r="14" fill="#8b78b6"/><path d="M2632.9 2026V2041.8M2632.9 2031.4A4.1 4.6 0 1 1 2641.1 2031.4A4.1 4.6 0 1 1 2632.9 2031.4" fill="none" stroke="#33293f" stroke-width="1.8"/><circle cx="2623" cy="2036.5" r="4.6" fill="#393c3f"/><circle cx="2623" cy="2036.5" r="3.2" fill="#ee6a2a"/><circle cx="2623" cy="2045" r="4.4" fill="#393c3f"/><circle cx="2623" cy="2045" r="3.2" fill="#5fb83f"/><path d="M2659 2032V2027Q2659 2025 2661 2025H2663Q2665 2025 2665 2027V2030" fill="none" stroke="#5ea447" stroke-width="2"/><rect x="2662" y="2030" width="12" height="10" fill="#5b9847"/><text x="2691" y="2042" font-size="26" fill="#9d7fb3" stroke="#9d7fb3" stroke-width="0.4">source</text><text x="3248" y="2042" font-size="26" fill="#aab8c6" stroke="#aab8c6" stroke-width="0.4" text-anchor="end">Item</text><circle cx="2636" cy="2076" r="14" fill="#8b78b6"/><path d="M2632.9 2070V2085.8M2632.9 2075.4A4.1 4.6 0 1 1 2641.1 2075.4A4.1 4.6 0 1 1 2632.9 2075.4" fill="none" stroke="#33293f" stroke-width="1.8"/><circle cx="2623" cy="2080.5" r="4.6" fill="#393c3f"/><circle cx="2623" cy="2080.5" r="3.2" fill="#ee6a2a"/><circle cx="2623" cy="2089" r="4.4" fill="#393c3f"/><circle cx="2623" cy="2089" r="3.2" fill="#5fb83f"/><path d="M2659 2076V2071Q2659 2069 2661 2069H2663Q2665 2069 2665 2071V2074" fill="none" stroke="#5ea447" stroke-width="2"/><rect x="2662" y="2074" width="12" height="10" fill="#5b9847"/><text x="2691" y="2086" font-size="26" fill="#9d7fb3" stroke="#9d7fb3" stroke-width="0.4">session</text><text x="3248" y="2086" font-size="26" fill="#aab8c6" stroke="#aab8c6" stroke-width="0.4" text-anchor="end">Session</text><circle cx="2636" cy="2120" r="14" fill="#8b78b6"/><path d="M2632.9 2114V2129.8M2632.9 2119.4A4.1 4.6 0 1 1 2641.1 2119.4A4.1 4.6 0 1 1 2632.9 2119.4" fill="none" stroke="#33293f" stroke-width="1.8"/><circle cx="2623" cy="2124.5" r="4.6" fill="#393c3f"/><circle cx="2623" cy="2124.5" r="3.2" fill="#ee6a2a"/><circle cx="2623" cy="2133" r="4.4" fill="#393c3f"/><circle cx="2623" cy="2133" r="3.2" fill="#5fb83f"/><path d="M2659 2120V2115Q2659 2113 2661 2113H2663Q2665 2113 2665 2115V2118" fill="none" stroke="#5ea447" stroke-width="2"/><rect x="2662" y="2118" width="12" height="10" fill="#5b9847"/><text x="2691" y="2130" font-size="26" fill="#9d7fb3" stroke="#9d7fb3" stroke-width="0.4">profile</text><text x="3248" y="2130" font-size="26" fill="#aab8c6" stroke="#aab8c6" stroke-width="0.4" text-anchor="end">Profile</text><circle cx="2636" cy="2164" r="14" fill="#8b78b6"/><path d="M2632.9 2158V2173.8M2632.9 2163.4A4.1 4.6 0 1 1 2641.1 2163.4A4.1 4.6 0 1 1 2632.9 2163.4" fill="none" stroke="#33293f" stroke-width="1.8"/><circle cx="2623" cy="2168.5" r="4.6" fill="#393c3f"/><circle cx="2623" cy="2168.5" r="3.2" fill="#ee6a2a"/><circle cx="2623" cy="2177" r="4.4" fill="#393c3f"/><circle cx="2623" cy="2177" r="3.2" fill="#5fb83f"/><path d="M2659 2164V2159Q2659 2157 2661 2157H2663Q2665 2157 2665 2159V2162" fill="none" stroke="#5ea447" stroke-width="2"/><rect x="2662" y="2162" width="12" height="10" fill="#5b9847"/><text x="2691" y="2174" font-size="26" fill="#9d7fb3" stroke="#9d7fb3" stroke-width="0.4">profileId</text><text x="3248" y="2174" font-size="26" fill="#aab8c6" stroke="#aab8c6" stroke-width="0.4" text-anchor="end">String</text><circle cx="2636" cy="2208" r="14" fill="#8b78b6"/><path d="M2632.9 2202V2217.8M2632.9 2207.4A4.1 4.6 0 1 1 2641.1 2207.4A4.1 4.6 0 1 1 2632.9 2207.4" fill="none" stroke="#33293f" stroke-width="1.8"/><circle cx="2623" cy="2212.5" r="4.6" fill="#393c3f"/><circle cx="2623" cy="2212.5" r="3.2" fill="#ee6a2a"/><circle cx="2623" cy="2221" r="4.4" fill="#393c3f"/><circle cx="2623" cy="2221" r="3.2" fill="#5fb83f"/><path d="M2659 2208V2203Q2659 2201 2661 2201H2663Q2665 2201 2665 2203V2206" fill="none" stroke="#5ea447" stroke-width="2"/><rect x="2662" y="2206" width="12" height="10" fill="#5b9847"/><text x="2691" y="2218" font-size="26" fill="#9d7fb3" stroke="#9d7fb3" stroke-width="0.4">properties</text><text x="3248" y="2218" font-size="26" fill="#aab8c6" stroke="#aab8c6" stroke-width="0.4" text-anchor="end">Map<tspan font-weight="bold">&lt;</tspan>String<tspan fill="#cc7832" stroke="#cc7832" font-weight="bold">,</tspan> Object<tspan font-weight="bold">&gt;</tspan></text><circle cx="2636" cy="2252" r="14" fill="#8b78b6"/><path d="M2632.9 2246V2261.8M2632.9 2251.4A4.1 4.6 0 1 1 2641.1 2251.4A4.1 4.6 0 1 1 2632.9 2251.4" fill="none" stroke="#33293f" stroke-width="1.8"/><circle cx="2623" cy="2256.5" r="4.6" fill="#393c3f"/><circle cx="2623" cy="2256.5" r="3.2" fill="#ee6a2a"/><circle cx="2623" cy="2265" r="4.4" fill="#393c3f"/><circle cx="2623" cy="2265" r="3.2" fill="#5fb83f"/><path d="M2659 2252V2247Q2659 2245 2661 2245H2663Q2665 2245 2665 2247V2250" fill="none" stroke="#5ea447" stroke-width="2"/><rect x="2662" y="2250" width="12" height="10" fill="#5b9847"/><text x="2691" y="2262" font-size="26" fill="#9d7fb3" stroke="#9d7fb3" stroke-width="0.4">attributes</text><text x="3248" y="2262" font-size="26" fill="#aab8c6" stroke="#aab8c6" stroke-width="0.4" text-anchor="end">Map<tspan font-weight="bold">&lt;</tspan>String<tspan fill="#cc7832" stroke="#cc7832" font-weight="bold">,</tspan> Object<tspan font-weight="bold">&gt;</tspan></text><circle cx="2636" cy="2296" r="14" fill="#8b78b6"/><path d="M2632.9 2290V2305.8M2632.9 2295.4A4.1 4.6 0 1 1 2641.1 2295.4A4.1 4.6 0 1 1 2632.9 2295.4" fill="none" stroke="#33293f" stroke-width="1.8"/><circle cx="2623" cy="2300.5" r="4.6" fill="#393c3f"/><circle cx="2623" cy="2300.5" r="3.2" fill="#ee6a2a"/><circle cx="2623" cy="2309" r="4.4" fill="#393c3f"/><circle cx="2623" cy="2309" r="3.2" fill="#5fb83f"/><path d="M2659 2296V2291Q2659 2289 2661 2289H2663Q2665 2289 2665 2291V2294" fill="none" stroke="#5ea447" stroke-width="2"/><rect x="2662" y="2294" width="12" height="10" fill="#5b9847"/><text x="2691" y="2306" font-size="26" fill="#9d7fb3" stroke="#9d7fb3" stroke-width="0.4">eventType</text><text x="3248" y="2306" font-size="26" fill="#aab8c6" stroke="#aab8c6" stroke-width="0.4" text-anchor="end">String</text><circle cx="2636" cy="2340" r="14" fill="#8b78b6"/><path d="M2632.9 2334V2349.8M2632.9 2339.4A4.1 4.6 0 1 1 2641.1 2339.4A4.1 4.6 0 1 1 2632.9 2339.4" fill="none" stroke="#33293f" stroke-width="1.8"/><circle cx="2623" cy="2344.5" r="4.6" fill="#393c3f"/><circle cx="2623" cy="2344.5" r="3.2" fill="#ee6a2a"/><circle cx="2623" cy="2353" r="4.4" fill="#393c3f"/><circle cx="2623" cy="2353" r="3.2" fill="#5fb83f"/><path d="M2659 2340V2335Q2659 2333 2661 2333H2663Q2665 2333 2665 2335V2338" fill="none" stroke="#5ea447" stroke-width="2"/><rect x="2662" y="2338" width="12" height="10" fill="#5b9847"/><text x="2691" y="2350" font-size="26" fill="#9d7fb3" stroke="#9d7fb3" stroke-width="0.4">target</text><text x="3248" y="2350" font-size="26" fill="#aab8c6" stroke="#aab8c6" stroke-width="0.4" text-anchor="end">Item</text><circle cx="2636" cy="2384" r="14" fill="#8b78b6"/><path d="M2632.9 2378V2393.8M2632.9 2383.4A4.1 4.6 0 1 1 2641.1 2383.4A4.1 4.6 0 1 1 2632.9 2383.4" fill="none" stroke="#33293f" stroke-width="1.8"/><circle cx="2623" cy="2388.5" r="4.6" fill="#393c3f"/><circle cx="2623" cy="2388.5" r="3.2" fill="#ee6a2a"/><circle cx="2623" cy="2397" r="4.4" fill="#393c3f"/><circle cx="2623" cy="2397" r="3.2" fill="#5fb83f"/><path d="M2659 2384V2379Q2659 2377 2661 2377H2663Q2665 2377 2665 2379V2382" fill="none" stroke="#5ea447" stroke-width="2"/><rect x="2662" y="2382" width="12" height="10" fill="#5b9847"/><text x="2691" y="2394" font-size="26" fill="#9d7fb3" stroke="#9d7fb3" stroke-width="0.4">flattenedProperties</text><text x="3248" y="2394" font-size="26" fill="#aab8c6" stroke="#aab8c6" stroke-width="0.4" text-anchor="end">Map<tspan font-weight="bold">&lt;</tspan>String<tspan fill="#cc7832" stroke="#cc7832" font-weight="bold">,</tspan> Object<tspan font-weight="bold">&gt;</tspan></text><circle cx="2636" cy="2428" r="14" fill="#8b78b6"/><path d="M2632.9 2422V2437.8M2632.9 2427.4A4.1 4.6 0 1 1 2641.1 2427.4A4.1 4.6 0 1 1 2632.9 2427.4" fill="none" stroke="#33293f" stroke-width="1.8"/><circle cx="2623" cy="2432.5" r="4.6" fill="#393c3f"/><circle cx="2623" cy="2432.5" r="3.2" fill="#ee6a2a"/><circle cx="2623" cy="2441" r="4.4" fill="#393c3f"/><circle cx="2623" cy="2441" r="3.2" fill="#5fb83f"/><path d="M2659 2428V2423Q2659 2421 2661 2421H2663Q2665 2421 2665 2423V2426" fill="none" stroke="#5ea447" stroke-width="2"/><rect x="2662" y="2426" width="12" height="10" fill="#5b9847"/><text x="2691" y="2438" font-size="26" fill="#9d7fb3" stroke="#9d7fb3" stroke-width="0.4">timeStamp</text><text x="3248" y="2438" font-size="26" fill="#aab8c6" stroke="#aab8c6" stroke-width="0.4" text-anchor="end">Date</text><circle cx="2636" cy="2472" r="14" fill="#8b78b6"/><path d="M2632.9 2466V2481.8M2632.9 2471.4A4.1 4.6 0 1 1 2641.1 2471.4A4.1 4.6 0 1 1 2632.9 2471.4" fill="none" stroke="#33293f" stroke-width="1.8"/><circle cx="2623" cy="2476.5" r="4.6" fill="#393c3f"/><circle cx="2623" cy="2476.5" r="3.2" fill="#ee6a2a"/><circle cx="2623" cy="2485" r="4.4" fill="#393c3f"/><circle cx="2623" cy="2485" r="3.2" fill="#5fb83f"/><path d="M2659 2472V2467Q2659 2465 2661 2465H2663Q2665 2465 2665 2467V2470" fill="none" stroke="#5ea447" stroke-width="2"/><rect x="2662" y="2470" width="12" height="10" fill="#5b9847"/><text x="2691" y="2482" font-size="26" fill="#9d7fb3" stroke="#9d7fb3" stroke-width="0.4">persistent</text><text x="3248" y="2482" font-size="26" fill="#aab8c6" stroke="#aab8c6" stroke-width="0.4" text-anchor="end"><tspan fill="#cc7832" stroke="#cc7832">boolean</tspan></text><rect x="1684" y="1988" width="546" height="194" fill="#737373"/><rect x="1686" y="1990" width="542" height="56" fill="#3c3c3c"/><rect x="1686" y="2048" width="542" height="132" fill="#393c3f"/><circle cx="1861.6" cy="2018" r="14" fill="#3d88a4"/><path d="M1864.8999999999999 2014.4A4.7 4.7 0 1 0 1864.8999999999999 2021.1" fill="none" stroke="#1f3540" stroke-width="1.7"/><path d="M1884.6 2018V2013Q1884.6 2011 1886.6 2011H1888.6Q1890.6 2011 1890.6 2013V2016" fill="none" stroke="#5ea447" stroke-width="2"/><rect x="1887.6" y="2016" width="12" height="10" fill="#5b9847"/><text x="1923.1" y="2030" font-size="32" fill="#b6c3d2" stroke="#b6c3d2" stroke-width="0.4">Condition</text><circle cx="1710" cy="2070" r="14" fill="#8b78b6"/><path d="M1706.9 2064V2079.8M1706.9 2069.4A4.1 4.6 0 1 1 1715.1 2069.4A4.1 4.6 0 1 1 1706.9 2069.4" fill="none" stroke="#33293f" stroke-width="1.8"/><circle cx="1697" cy="2074.5" r="4.6" fill="#393c3f"/><circle cx="1697" cy="2074.5" r="3.2" fill="#ee6a2a"/><circle cx="1697" cy="2083" r="4.4" fill="#393c3f"/><circle cx="1697" cy="2083" r="3.2" fill="#5fb83f"/><path d="M1733 2070V2065Q1733 2063 1735 2063H1737Q1739 2063 1739 2065V2068" fill="none" stroke="#5ea447" stroke-width="2"/><rect x="1736" y="2068" width="12" height="10" fill="#5b9847"/><text x="1765" y="2080" font-size="26" fill="#9d7fb3" stroke="#9d7fb3" stroke-width="0.4">conditionType</text><text x="2218" y="2080" font-size="26" fill="#aab8c6" stroke="#aab8c6" stroke-width="0.4" text-anchor="end">ConditionType</text><circle cx="1710" cy="2114" r="14" fill="#8b78b6"/><path d="M1706.9 2108V2123.8M1706.9 2113.4A4.1 4.6 0 1 1 1715.1 2113.4A4.1 4.6 0 1 1 1706.9 2113.4" fill="none" stroke="#33293f" stroke-width="1.8"/><circle cx="1697" cy="2118.5" r="4.6" fill="#393c3f"/><circle cx="1697" cy="2118.5" r="3.2" fill="#ee6a2a"/><circle cx="1697" cy="2127" r="4.4" fill="#393c3f"/><circle cx="1697" cy="2127" r="3.2" fill="#5fb83f"/><path d="M1733 2114V2109Q1733 2107 1735 2107H1737Q1739 2107 1739 2109V2112" fill="none" stroke="#5ea447" stroke-width="2"/><rect x="1736" y="2112" width="12" height="10" fill="#5b9847"/><text x="1765" y="2124" font-size="26" fill="#9d7fb3" stroke="#9d7fb3" stroke-width="0.4">parameterValues</text><text x="2218" y="2124" font-size="26" fill="#aab8c6" stroke="#aab8c6" stroke-width="0.4" text-anchor="end">Map<tspan font-weight="bold">&lt;</tspan>String<tspan fill="#cc7832" stroke="#cc7832" font-weight="bold">,</tspan> Object<tspan font-weight="bold">&gt;</tspan></text><circle cx="1710" cy="2158" r="14" fill="#8b78b6"/><path d="M1706.9 2152V2167.8M1706.9 2157.4A4.1 4.6 0 1 1 1715.1 2157.4A4.1 4.6 0 1 1 1706.9 2157.4" fill="none" stroke="#33293f" stroke-width="1.8"/><circle cx="1697" cy="2162.5" r="4.6" fill="#393c3f"/><circle cx="1697" cy="2162.5" r="3.2" fill="#ee6a2a"/><circle cx="1697" cy="2171" r="4.4" fill="#393c3f"/><circle cx="1697" cy="2171" r="3.2" fill="#5fb83f"/><path d="M1733 2158V2153Q1733 2151 1735 2151H1737Q1739 2151 1739 2153V2156" fill="none" stroke="#5ea447" stroke-width="2"/><rect x="1736" y="2156" width="12" height="10" fill="#5b9847"/><text x="1765" y="2168" font-size="26" fill="#9d7fb3" stroke="#9d7fb3" stroke-width="0.4">conditionTypeId</text><text x="2218" y="2168" font-size="26" fill="#aab8c6" stroke="#aab8c6" stroke-width="0.4" text-anchor="end">String</text><rect x="1279" y="2126" width="194" height="56" fill="#737373"/><rect x="1281" y="2128" width="190" height="52" fill="#3c3c3c"/><circle cx="1303" cy="2154" r="14" fill="#3d88a4"/><path d="M1306.3 2150.4A4.7 4.7 0 1 0 1306.3 2157.1" fill="none" stroke="#1f3540" stroke-width="1.7"/><path d="M1326 2154V2149Q1326 2147 1328 2147H1330Q1332 2147 1332 2149V2152" fill="none" stroke="#5ea447" stroke-width="2"/><rect x="1329" y="2152" width="12" height="10" fill="#5b9847"/><text x="1365" y="2166" font-size="32" fill="#b6c3d2" stroke="#b6c3d2" stroke-width="0.4">Scope</text><rect x="160" y="2204" width="324" height="106" fill="#737373"/><rect x="162" y="2206" width="320" height="56" fill="#3c3c3c"/><rect x="162" y="2264" width="320" height="44" fill="#393c3f"/><circle cx="230.2" cy="2234" r="14" fill="#3d88a4"/><path d="M233.5 2230.4A4.7 4.7 0 1 0 233.5 2237.1" fill="none" stroke="#1f3540" stroke-width="1.7"/><path d="M253.2 2234V2229Q253.2 2227 255.2 2227H257.2Q259.2 2227 259.2 2229V2232" fill="none" stroke="#5ea447" stroke-width="2"/><rect x="256.2" y="2232" width="12" height="10" fill="#5b9847"/><text x="291.7" y="2246" font-size="32" fill="#b6c3d2" stroke="#b6c3d2" stroke-width="0.4">Segment</text><circle cx="186" cy="2286" r="14" fill="#8b78b6"/><path d="M182.9 2280V2295.8M182.9 2285.4A4.1 4.6 0 1 1 191.1 2285.4A4.1 4.6 0 1 1 182.9 2285.4" fill="none" stroke="#33293f" stroke-width="1.8"/><circle cx="173" cy="2290.5" r="4.6" fill="#393c3f"/><circle cx="173" cy="2290.5" r="3.2" fill="#ee6a2a"/><circle cx="173" cy="2299" r="4.4" fill="#393c3f"/><circle cx="173" cy="2299" r="3.2" fill="#5fb83f"/><path d="M209 2286V2281Q209 2279 211 2279H213Q215 2279 215 2281V2284" fill="none" stroke="#5ea447" stroke-width="2"/><rect x="212" y="2284" width="12" height="10" fill="#5b9847"/><text x="241" y="2296" font-size="26" fill="#9d7fb3" stroke="#9d7fb3" stroke-width="0.4">condition</text><text x="472" y="2296" font-size="26" fill="#aab8c6" stroke="#aab8c6" stroke-width="0.4" text-anchor="end">Condition</text><rect x="1276" y="2302" width="351" height="194" fill="#737373"/><rect x="1278" y="2304" width="347" height="56" fill="#3c3c3c"/><rect x="1278" y="2362" width="347" height="132" fill="#393c3f"/><circle cx="1390.0" cy="2332" r="14" fill="#3d88a4"/><path d="M1393.3 2328.4A4.7 4.7 0 1 0 1393.3 2335.1" fill="none" stroke="#1f3540" stroke-width="1.7"/><path d="M1413.0 2332V2327Q1413.0 2325 1415.0 2325H1417.0Q1419.0 2325 1419.0 2327V2330" fill="none" stroke="#5ea447" stroke-width="2"/><rect x="1416.0" y="2330" width="12" height="10" fill="#5b9847"/><text x="1451.5" y="2344" font-size="32" fill="#b6c3d2" stroke="#b6c3d2" stroke-width="0.4">Goal</text><circle cx="1302" cy="2384" r="14" fill="#8b78b6"/><path d="M1298.9 2378V2393.8M1298.9 2383.4A4.1 4.6 0 1 1 1307.1 2383.4A4.1 4.6 0 1 1 1298.9 2383.4" fill="none" stroke="#33293f" stroke-width="1.8"/><circle cx="1289" cy="2388.5" r="4.6" fill="#393c3f"/><circle cx="1289" cy="2388.5" r="3.2" fill="#ee6a2a"/><circle cx="1289" cy="2397" r="4.4" fill="#393c3f"/><circle cx="1289" cy="2397" r="3.2" fill="#5fb83f"/><path d="M1325 2384V2379Q1325 2377 1327 2377H1329Q1331 2377 1331 2379V2382" fill="none" stroke="#5ea447" stroke-width="2"/><rect x="1328" y="2382" width="12" height="10" fill="#5b9847"/><text x="1357" y="2394" font-size="26" fill="#9d7fb3" stroke="#9d7fb3" stroke-width="0.4">campaignId</text><text x="1615" y="2394" font-size="26" fill="#aab8c6" stroke="#aab8c6" stroke-width="0.4" text-anchor="end">String</text><circle cx="1302" cy="2428" r="14" fill="#8b78b6"/><path d="M1298.9 2422V2437.8M1298.9 2427.4A4.1 4.6 0 1 1 1307.1 2427.4A4.1 4.6 0 1 1 1298.9 2427.4" fill="none" stroke="#33293f" stroke-width="1.8"/><circle cx="1289" cy="2432.5" r="4.6" fill="#393c3f"/><circle cx="1289" cy="2432.5" r="3.2" fill="#ee6a2a"/><circle cx="1289" cy="2441" r="4.4" fill="#393c3f"/><circle cx="1289" cy="2441" r="3.2" fill="#5fb83f"/><path d="M1325 2428V2423Q1325 2421 1327 2421H1329Q1331 2421 1331 2423V2426" fill="none" stroke="#5ea447" stroke-width="2"/><rect x="1328" y="2426" width="12" height="10" fill="#5b9847"/><text x="1357" y="2438" font-size="26" fill="#9d7fb3" stroke="#9d7fb3" stroke-width="0.4">startEvent</text><text x="1615" y="2438" font-size="26" fill="#aab8c6" stroke="#aab8c6" stroke-width="0.4" text-anchor="end">Condition</text><circle cx="1302" cy="2472" r="14" fill="#8b78b6"/><path d="M1298.9 2466V2481.8M1298.9 2471.4A4.1 4.6 0 1 1 1307.1 2471.4A4.1 4.6 0 1 1 1298.9 2471.4" fill="none" stroke="#33293f" stroke-width="1.8"/><circle cx="1289" cy="2476.5" r="4.6" fill="#393c3f"/><circle cx="1289" cy="2476.5" r="3.2" fill="#ee6a2a"/><circle cx="1289" cy="2485" r="4.4" fill="#393c3f"/><circle cx="1289" cy="2485" r="3.2" fill="#5fb83f"/><path d="M1325 2472V2467Q1325 2465 1327 2465H1329Q1331 2465 1331 2467V2470" fill="none" stroke="#5ea447" stroke-width="2"/><rect x="1328" y="2470" width="12" height="10" fill="#5b9847"/><text x="1357" y="2482" font-size="26" fill="#9d7fb3" stroke="#9d7fb3" stroke-width="0.4">targetEvent</text><text x="1615" y="2482" font-size="26" fill="#aab8c6" stroke="#aab8c6" stroke-width="0.4" text-anchor="end">Condition</text><rect x="86" y="2390" width="472" height="106" fill="#737373"/><rect x="88" y="2392" width="468" height="56" fill="#3c3c3c"/><rect x="88" y="2450" width="468" height="44" fill="#393c3f"/><circle cx="240.0" cy="2420" r="14" fill="#3d88a4"/><path d="M243.3 2416.4A4.7 4.7 0 1 0 243.3 2423.1" fill="none" stroke="#1f3540" stroke-width="1.7"/><path d="M263.0 2420V2415Q263.0 2413 265.0 2413H267.0Q269.0 2413 269.0 2415V2418" fill="none" stroke="#5ea447" stroke-width="2"/><rect x="266.0" y="2418" width="12" height="10" fill="#5b9847"/><text x="301.5" y="2432" font-size="32" fill="#b6c3d2" stroke="#b6c3d2" stroke-width="0.4">Scoring</text><circle cx="112" cy="2472" r="14" fill="#8b78b6"/><path d="M108.9 2466V2481.8M108.9 2471.4A4.1 4.6 0 1 1 117.1 2471.4A4.1 4.6 0 1 1 108.9 2471.4" fill="none" stroke="#33293f" stroke-width="1.8"/><circle cx="99" cy="2476.5" r="4.6" fill="#393c3f"/><circle cx="99" cy="2476.5" r="3.2" fill="#ee6a2a"/><circle cx="99" cy="2485" r="4.4" fill="#393c3f"/><circle cx="99" cy="2485" r="3.2" fill="#5fb83f"/><path d="M135 2472V2467Q135 2465 137 2465H139Q141 2465 141 2467V2470" fill="none" stroke="#5ea447" stroke-width="2"/><rect x="138" y="2470" width="12" height="10" fill="#5b9847"/><text x="167" y="2482" font-size="26" fill="#9d7fb3" stroke="#9d7fb3" stroke-width="0.4">elements</text><text x="546" y="2482" font-size="26" fill="#aab8c6" stroke="#aab8c6" stroke-width="0.4" text-anchor="end">List<tspan font-weight="bold">&lt;</tspan>ScoringElement<tspan font-weight="bold">&gt;</tspan></text><rect x="1712" y="2616" width="222" height="56" fill="#737373"/><rect x="1714" y="2618" width="218" height="52" fill="#3c3c3c"/><circle cx="1736" cy="2644" r="14" fill="#3d88a4"/><path d="M1739.3 2640.4A4.7 4.7 0 1 0 1739.3 2647.1" fill="none" stroke="#1f3540" stroke-width="1.7"/><path d="M1759 2644V2639Q1759 2637 1761 2637H1763Q1765 2637 1765 2639V2642" fill="none" stroke="#5ea447" stroke-width="2"/><rect x="1762" y="2642" width="12" height="10" fill="#5b9847"/><text x="1798" y="2656" font-size="32" fill="#b6c3d2" stroke="#b6c3d2" stroke-width="0.4">UserList</text></g>
<g><path d="M2701.5 113L2712 96L2722.5 113" fill="none" stroke="#bdbdbd" stroke-width="2"/><path d="M2701.5 519L2712 502L2722.5 519" fill="none" stroke="#bdbdbd" stroke-width="2"/><path d="M1550 1095.5L1533 1106L1550 1116.5" fill="none" stroke="#bdbdbd" stroke-width="2"/><path d="M2515.5 1013L2526 996L2536.5 1013" fill="none" stroke="#bdbdbd" stroke-width="2"/><path d="M2885.5 1013L2896 996L2906.5 1013" fill="none" stroke="#bdbdbd" stroke-width="2"/><path d="M2530.5 1720L2541 1703L2551.5 1720" fill="none" stroke="#bdbdbd" stroke-width="2"/><path d="M311.5 1417L322 1400L332.5 1417" fill="none" stroke="#bdbdbd" stroke-width="2"/><path d="M311.5 1691L322 1674L332.5 1691" fill="none" stroke="#bdbdbd" stroke-width="2"/><path d="M1713 1440.5L1730 1451L1713 1461.5" fill="none" stroke="#bdbdbd" stroke-width="2"/><path d="M856.5 1440L867 1423L877.5 1440" fill="none" stroke="#bdbdbd" stroke-width="2"/><path d="M1946.5 1607L1957 1590L1967.5 1607" fill="none" stroke="#bdbdbd" stroke-width="2"/><path d="M1936.5 1971L1947 1988L1957.5 1971" fill="none" stroke="#bdbdbd" stroke-width="2"/><path d="M1956.5 1925L1967 1908L1977.5 1925" fill="none" stroke="#bdbdbd" stroke-width="2"/><path d="M1694.5 1971L1705 1988L1715.5 1971" fill="none" stroke="#bdbdbd" stroke-width="2"/><path d="M1667 2038.8L1684 2049.3L1667 2059.8" fill="none" stroke="#bdbdbd" stroke-width="2"/><path d="M1768.5 2199L1779 2182L1789.5 2199" fill="none" stroke="#bdbdbd" stroke-width="2"/><path d="M1947.1 2199L1957.6 2182L1968.1 2199" fill="none" stroke="#bdbdbd" stroke-width="2"/></g>
<g><text x="2615" y="145" font-size="26" fill="#adbccb" stroke="#adbccb" stroke-width="0.4">1</text><text x="2695" y="145" font-size="26" fill="#adbccb" stroke="#adbccb" stroke-width="0.4">1</text><text x="2718" y="145" font-size="26" fill="#adbccb" stroke="#adbccb" stroke-width="0.4">status</text><text x="2622" y="540" font-size="26" fill="#adbccb" stroke="#adbccb" stroke-width="0.4" text-anchor="middle">*</text><text x="2695" y="551" font-size="26" fill="#adbccb" stroke="#adbccb" stroke-width="0.4">1</text><text x="2718" y="551" font-size="26" fill="#adbccb" stroke="#adbccb" stroke-width="0.4">consents</text><text x="1551" y="1096" font-size="26" fill="#adbccb" stroke="#adbccb" stroke-width="0.4">1</text><text x="1684" y="1133" font-size="26" fill="#adbccb" stroke="#adbccb" stroke-width="0.4">source</text><text x="2830" y="1817" font-size="26" fill="#adbccb" stroke="#adbccb" stroke-width="0.4">1</text><text x="2509" y="1033" font-size="26" fill="#adbccb" stroke="#adbccb" stroke-width="0.4">1</text><text x="2533" y="1033" font-size="26" fill="#adbccb" stroke="#adbccb" stroke-width="0.4">profile</text><text x="2524" y="1145" font-size="26" fill="#adbccb" stroke="#adbccb" stroke-width="0.4">1</text><text x="2901" y="1025" font-size="26" fill="#adbccb" stroke="#adbccb" stroke-width="0.4">profile</text><text x="3020" y="1025" font-size="26" fill="#adbccb" stroke="#adbccb" stroke-width="0.4">1</text><text x="2998" y="1832" font-size="26" fill="#adbccb" stroke="#adbccb" stroke-width="0.4">1</text><text x="2523" y="1740" font-size="26" fill="#adbccb" stroke="#adbccb" stroke-width="0.4">1</text><text x="2546" y="1740" font-size="26" fill="#adbccb" stroke="#adbccb" stroke-width="0.4">session</text><text x="2675" y="1849" font-size="26" fill="#adbccb" stroke="#adbccb" stroke-width="0.4">1</text><text x="224" y="1448" font-size="26" fill="#adbccb" stroke="#adbccb" stroke-width="0.4">1</text><text x="304" y="1448" font-size="26" fill="#adbccb" stroke="#adbccb" stroke-width="0.4">1</text><text x="326" y="1448" font-size="26" fill="#adbccb" stroke="#adbccb" stroke-width="0.4">actionType</text><text x="224" y="1721" font-size="26" fill="#adbccb" stroke="#adbccb" stroke-width="0.4">1</text><text x="310" y="1721" font-size="26" fill="#adbccb" stroke="#adbccb" stroke-width="0.4" text-anchor="middle">*</text><text x="326" y="1721" font-size="26" fill="#adbccb" stroke="#adbccb" stroke-width="0.4">actions</text><text x="552" y="1442" font-size="26" fill="#adbccb" stroke="#adbccb" stroke-width="0.4" text-anchor="middle">1</text><text x="1710" y="1440" font-size="26" fill="#adbccb" stroke="#adbccb" stroke-width="0.4" text-anchor="middle">*</text><text x="1583" y="1478" font-size="26" fill="#adbccb" stroke="#adbccb" stroke-width="0.4">parameters</text><text x="849" y="1470" font-size="26" fill="#adbccb" stroke="#adbccb" stroke-width="0.4">1</text><text x="872" y="1470" font-size="26" fill="#adbccb" stroke="#adbccb" stroke-width="0.4">metadata</text><text x="1039" y="1530" font-size="26" fill="#adbccb" stroke="#adbccb" stroke-width="0.4">1</text><text x="1858" y="1639" font-size="26" fill="#adbccb" stroke="#adbccb" stroke-width="0.4">1</text><text x="1946" y="1639" font-size="26" fill="#adbccb" stroke="#adbccb" stroke-width="0.4" text-anchor="middle">*</text><text x="1962" y="1639" font-size="26" fill="#adbccb" stroke="#adbccb" stroke-width="0.4">parameters</text><text x="1927" y="1917" font-size="26" fill="#adbccb" stroke="#adbccb" stroke-width="0.4">1</text><text x="1927" y="1969" font-size="26" fill="#adbccb" stroke="#adbccb" stroke-width="0.4">1</text><text x="1953" y="1997" font-size="26" fill="#adbccb" stroke="#adbccb" stroke-width="0.4">parentCondition</text><text x="1972" y="1944" font-size="26" fill="#adbccb" stroke="#adbccb" stroke-width="0.4">conditionType</text><text x="1867" y="1957" font-size="26" fill="#adbccb" stroke="#adbccb" stroke-width="0.4">1</text><text x="1867" y="1997" font-size="26" fill="#adbccb" stroke="#adbccb" stroke-width="0.4">1</text><text x="625" y="1777" font-size="26" fill="#adbccb" stroke="#adbccb" stroke-width="0.4" text-anchor="middle">1</text><text x="1688" y="1970" font-size="26" fill="#adbccb" stroke="#adbccb" stroke-width="0.4">1</text><text x="1712" y="1970" font-size="26" fill="#adbccb" stroke="#adbccb" stroke-width="0.4">condition</text><text x="1271" y="2041" font-size="26" fill="#adbccb" stroke="#adbccb" stroke-width="0.4" text-anchor="middle">1</text><text x="1659" y="2040" font-size="26" fill="#adbccb" stroke="#adbccb" stroke-width="0.4" text-anchor="middle">1</text><text x="1505" y="2077" font-size="26" fill="#adbccb" stroke="#adbccb" stroke-width="0.4">entryCondition</text><text x="505" y="2231" font-size="26" fill="#adbccb" stroke="#adbccb" stroke-width="0.4" text-anchor="middle">1</text><text x="1760" y="2222" font-size="26" fill="#adbccb" stroke="#adbccb" stroke-width="0.4">1</text><text x="1784" y="2222" font-size="26" fill="#adbccb" stroke="#adbccb" stroke-width="0.4">condition</text><text x="1568" y="2290" font-size="26" fill="#adbccb" stroke="#adbccb" stroke-width="0.4">1</text><text x="1940" y="2232" font-size="26" fill="#adbccb" stroke="#adbccb" stroke-width="0.4">1</text><text x="1962" y="2232" font-size="26" fill="#adbccb" stroke="#adbccb" stroke-width="0.4">startEvent</text></g>
</svg></body></html>
